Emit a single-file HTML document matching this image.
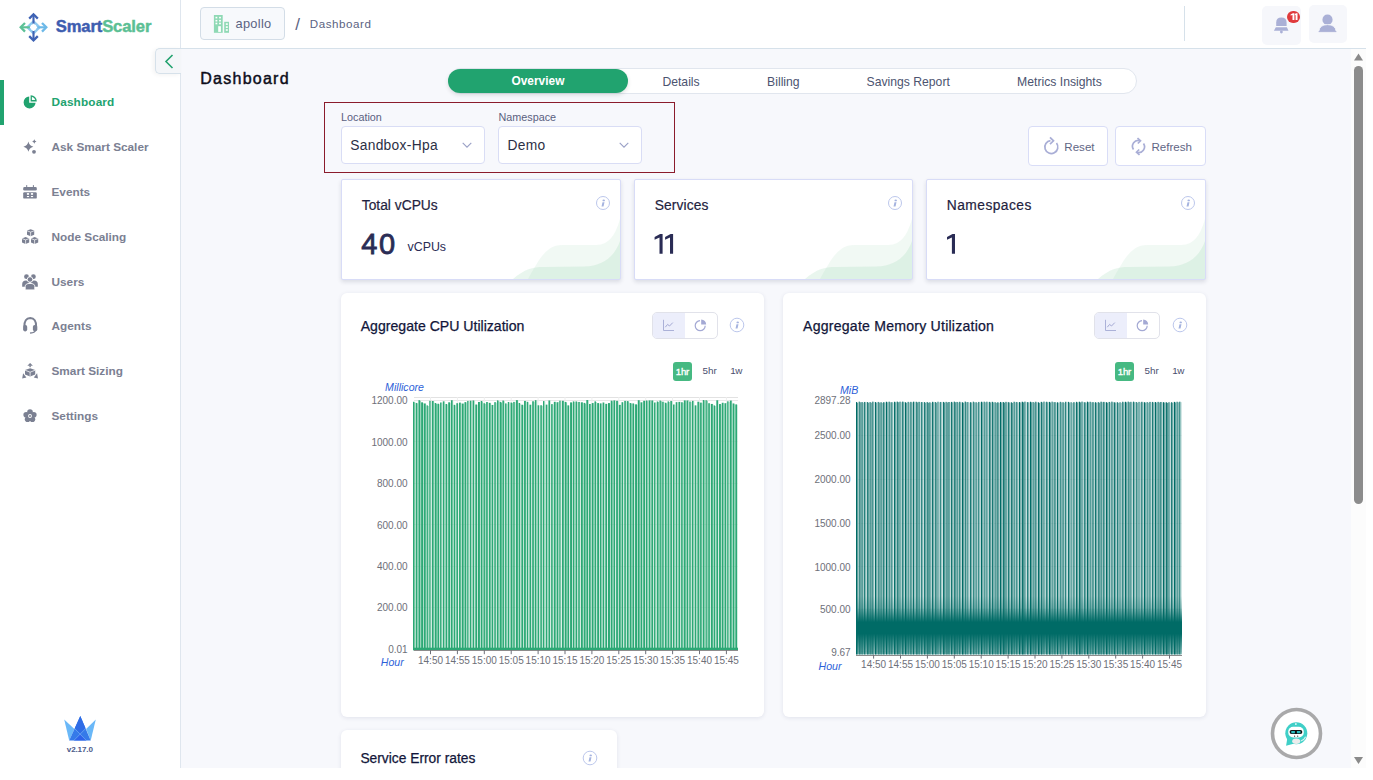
<!DOCTYPE html><html><head><meta charset="utf-8"><style>
html,body{margin:0;padding:0;background:#fff;width:1373px;height:780px;overflow:hidden}
#pg{position:absolute;left:0;top:0;width:1366px;height:768px;overflow:hidden;background:#f7f8fc;font-family:"Liberation Sans", sans-serif}
.t{position:absolute;line-height:1em;white-space:nowrap;font-family:"Liberation Sans", sans-serif}
.r{position:absolute;box-sizing:border-box}
svg{position:absolute;overflow:visible}
</style></head><body><div id="pg">
<div class="r" style="left:0px;top:0px;width:180px;height:768px;background:#fff;"></div>
<div class="r" style="left:180px;top:0px;width:1px;height:768px;background:#dfe6ee;"></div>
<div class="r" style="left:181px;top:0px;width:1185px;height:48px;background:#fff;"></div>
<div class="r" style="left:181px;top:48px;width:1185px;height:1px;background:#d6e1ea;"></div>
<div class="r" style="left:155px;top:48px;width:26px;height:26px;background:#f4f6f9;border:1px solid #d6e1ea;border-right:none;border-radius:5px 0 0 5px;box-shadow:-2px 1px 4px rgba(0,0,0,0.05)"></div>
<svg style="left:164px;top:54px" width="12" height="16" viewBox="0 0 12 16"><path d="M8.5 1 L2 7.5 L8.5 14" fill="none" stroke="#23a26f" stroke-width="1.6"/></svg>
<svg style="left:19px;top:12px" width="30" height="31" viewBox="0 0 30 31">
<path d="M14.5 7.7 L22.3 15.3 L14.5 22.9 L6.7 15.3Z" fill="#8ec9ef"/>
<path d="M14.5 7.7 L14.5 22.9 M6.7 15.3 L22.3 15.3" stroke="#fff" stroke-width="1.2"/>
<circle cx="14.5" cy="15.3" r="3.1" fill="#fff"/>
<g fill="none" stroke-linejoin="miter" stroke-linecap="butt">
<path d="M14.5 3.5 L14.5 11.6" stroke="#3e62b4" stroke-width="2.1"/><path d="M10.2 6.6 L14.5 2.3 L18.8 6.6" stroke="#3e62b4" stroke-width="2.3"/>
<path d="M14.5 19 L14.5 27.2" stroke="#3e62b4" stroke-width="2.1"/><path d="M10.2 24.1 L14.5 28.4 L18.8 24.1" stroke="#3e62b4" stroke-width="2.3"/>
<path d="M2.5 15.3 L10.9 15.3" stroke="#5cc196" stroke-width="2.1"/><path d="M6 11 L1.7 15.3 L6 19.6" stroke="#5cc196" stroke-width="2.3"/>
<path d="M18.2 15.3 L26.6 15.3" stroke="#6db9e8" stroke-width="2.1"/><path d="M23 11 L27.3 15.3 L23 19.6" stroke="#6db9e8" stroke-width="2.3"/>
</g></svg>
<div class="t" style="left:55.70px;top:18.99px;font-size:16.6px;font-weight:700;color:#3d5db0;letter-spacing:-0.12px;-webkit-text-stroke-width:0.45px;"><span style="color:#3d5db0">Smart</span><span style="color:#5bbf94">Scaler</span></div>
<div class="r" style="left:0px;top:80px;width:4px;height:45px;background:#21a36f;"></div>
<div class="t" style="left:51.50px;top:97.47px;font-size:11.8px;font-weight:700;color:#21a36f;letter-spacing:0.15px;">Dashboard</div>
<div class="t" style="left:51.50px;top:142.47px;font-size:11.8px;font-weight:700;color:#7b8092;letter-spacing:0px;">Ask Smart Scaler</div>
<div class="t" style="left:51.50px;top:187.47px;font-size:11.8px;font-weight:700;color:#7b8092;letter-spacing:0px;">Events</div>
<div class="t" style="left:51.50px;top:232.47px;font-size:11.8px;font-weight:700;color:#7b8092;letter-spacing:0px;">Node Scaling</div>
<div class="t" style="left:51.50px;top:277.47px;font-size:11.8px;font-weight:700;color:#7b8092;letter-spacing:0px;">Users</div>
<div class="t" style="left:51.50px;top:321.47px;font-size:11.8px;font-weight:700;color:#7b8092;letter-spacing:0px;">Agents</div>
<div class="t" style="left:51.50px;top:366.47px;font-size:11.8px;font-weight:700;color:#7b8092;letter-spacing:0px;">Smart Sizing</div>
<div class="t" style="left:51.50px;top:411.47px;font-size:11.8px;font-weight:700;color:#7b8092;letter-spacing:0px;">Settings</div>
<svg style="left:23px;top:95px" width="14" height="14" viewBox="0 0 14 14"><path d="M6.2 1.4 A6 6 0 1 0 12.6 7.8 L6.2 7.8 Z" fill="#21a36f"/><path d="M7.6 0.2 A6 6 0 0 1 13.8 6.4 L7.6 6.4 Z" fill="#21a36f"/><path d="M8.9 1.7 A4.7 4.7 0 0 1 12.3 5.1 L8.9 5.1 Z" fill="#fff"/></svg>
<svg style="left:22px;top:139px" width="16" height="16" viewBox="0 0 16 16"><path d="M6.4 2.6 Q7.3 6.8 11.4 7.7 Q7.3 8.6 6.4 12.8 Q5.5 8.6 1.4 7.7 Q5.5 6.8 6.4 2.6Z" fill="#7b8092"/><path d="M12.3 0.3 Q12.7 2.1 14.5 2.5 Q12.7 2.9 12.3 4.7 Q11.9 2.9 10.1 2.5 Q11.9 2.1 12.3 0.3Z" fill="#7b8092"/><circle cx="12" cy="12.8" r="1.9" fill="#7b8092"/></svg>
<svg style="left:23px;top:184px" width="14" height="15" viewBox="0 0 14 15"><rect x="3.2" y="1.1" width="1" height="3" fill="#7b8092"/><rect x="9.9" y="1.1" width="1" height="3" fill="#7b8092"/><rect x="0.2" y="3.1" width="13.6" height="3.5" rx="1.3" fill="#7b8092"/><rect x="0.2" y="8.2" width="13.6" height="6.4" rx="1.2" fill="#7b8092"/><rect x="3.9" y="9.1" width="2.2" height="1.7" fill="#fff"/><rect x="7.9" y="9.1" width="2.2" height="1.7" fill="#fff"/><rect x="3.9" y="12" width="2.2" height="1.1" fill="#fff"/><rect x="7.9" y="12" width="2.2" height="1.1" fill="#fff"/></svg>
<svg style="left:22px;top:229px" width="17" height="16" viewBox="0 0 17 16"><g fill="#7b8092"><path d="M5 1.6 L8.6 0.3 L12.2 1.6 L12.2 5.8 L8.6 7.3 L5 5.8Z"/><path d="M0 9.4 L3.6 8.1 L7.2 9.4 L7.2 13.6 L3.6 15.1 L0 13.6Z"/><path d="M9 9.4 L12.6 8.1 L16.2 9.4 L16.2 13.6 L12.6 15.1 L9 13.6Z"/></g><g stroke="#fff" stroke-width="0.7" fill="none"><path d="M5 1.8 L8.6 3.1 L12.2 1.8 M8.6 3.1 L8.6 7.3"/><path d="M0 9.6 L3.6 10.9 L7.2 9.6 M3.6 10.9 L3.6 15.1"/><path d="M9 9.6 L12.6 10.9 L16.2 9.6 M12.6 10.9 L12.6 15.1"/></g></svg>
<svg style="left:22px;top:274px" width="17" height="17" viewBox="0 0 17 17"><g fill="#7b8092"><circle cx="4.5" cy="2.7" r="2.4"/><circle cx="11.4" cy="2.7" r="2.4"/><path d="M0.2 12.8 L0.2 10 Q0.2 6.5 4 6.5 Q6.5 6.5 7.5 8.5 L5 12.8 Z"/><path d="M15.8 12.8 L15.8 10 Q15.8 6.5 12 6.5 Q9.5 6.5 8.5 8.5 L11 12.8 Z"/></g><g fill="#7b8092" stroke="#fff" stroke-width="0.9"><circle cx="8" cy="5.5" r="2.8"/><path d="M3.2 15.9 L3.2 12.6 Q3.2 9.4 8 9.4 Q12.8 9.4 12.8 12.6 L12.8 15.9 Z"/></g></svg>
<svg style="left:22px;top:317px" width="16" height="17" viewBox="0 0 16 17"><path d="M2.4 9.5 Q2.2 1.2 8.25 1.1 Q14.3 1.2 14.1 9.5" fill="none" stroke="#7b8092" stroke-width="2"/><rect x="1.1" y="8" width="4.1" height="6.4" rx="1.8" fill="#7b8092"/><rect x="10.9" y="8" width="4.4" height="6.4" rx="1.8" fill="#7b8092"/><path d="M13.2 13.5 Q12.8 15.8 8.6 16" fill="none" stroke="#7b8092" stroke-width="1.4" stroke-linecap="round"/></svg>
<svg style="left:22px;top:362px" width="17" height="17" viewBox="0 0 17 17"><g fill="#7b8092"><path d="M5.3 3.8 L8.1 0.9 L10.9 3.8Z"/><rect x="7.4" y="3.4" width="1.4" height="1.8"/><path d="M0.2 16.6 L1.1 11.2 L4.4 15.6Z"/><path d="M16 16.6 L15.1 11.2 L11.8 15.6Z"/><path d="M8.1 6.2 L13.2 8.1 L13.2 12.6 L8.1 14.4 L3 12.6 L3 8.1Z"/></g><path d="M3 8.2 L8.1 10.2 L13.2 8.2 M8.1 10.2 L8.1 14.4" stroke="#fff" stroke-width="0.75" fill="none"/></svg>
<svg style="left:23px;top:409px" width="14" height="14" viewBox="0 0 14 14"><g fill="#7b8092"><circle cx="7" cy="3" r="2.8"/><circle cx="10.8" cy="5.8" r="2.8"/><circle cx="9.4" cy="10.3" r="2.8"/><circle cx="4.6" cy="10.3" r="2.8"/><circle cx="3.2" cy="5.8" r="2.8"/><circle cx="7" cy="7" r="4"/></g><circle cx="7" cy="7" r="1.9" fill="#fff"/><circle cx="7" cy="7" r="1" fill="#7b8092"/></svg>
<svg style="left:58px;top:710px" width="44" height="34" viewBox="0 0 44 34"><path d="M6.2 9.4 L16.4 18.9 L11.2 30.4Z" fill="#6ab8f8"/><path d="M37.8 9.4 L28.1 18.9 L32.7 30.4Z" fill="#6ab8f8"/><path d="M22.3 5.9 L32.7 30.4 L11.2 30.4 Z" fill="#357ae9"/><path d="M22.3 5.9 L27.4 18 L22.1 23.6 L16.9 18Z" fill="#2f6ce6"/><path d="M15.9 30.4 L22.1 24.2 L28.3 30.4Z" fill="#2e63ea"/><path d="M15.9 30.4 L27.6 18.6 M16.6 18.6 L28.3 30.4" stroke="#7fb4f4" stroke-width="0.6"/></svg>
<div class="t" style="left:66.80px;top:745.82px;font-size:8.1px;font-weight:700;color:#4b5b8a;letter-spacing:-0.15px;">v2.17.0</div>
<div class="r" style="left:200px;top:7px;width:85px;height:33px;background:#f7f9fc;border:1px solid #d3dde7;border-radius:4px"></div>
<svg style="left:213px;top:14px" width="17" height="20" viewBox="0 0 17 20"><rect x="0.9" y="1" width="8.8" height="17.8" fill="#8fd9b5"/><rect x="11.2" y="7.8" width="4.8" height="11" fill="#8fd9b5"/><g fill="#fff"><rect x="2.5" y="2.8" width="1.8" height="1.6"/><rect x="6.1" y="2.8" width="1.8" height="1.6"/><rect x="2.5" y="5.9" width="1.8" height="1.6"/><rect x="6.1" y="5.9" width="1.8" height="1.6"/><rect x="2.5" y="8.7" width="1.8" height="1.6"/><rect x="6.1" y="8.7" width="1.8" height="1.6"/><rect x="5.2" y="12.2" width="2.7" height="5.7"/><rect x="12.8" y="9.3" width="2" height="1.6"/><rect x="12.8" y="12.3" width="2" height="1.6"/><rect x="12.8" y="15.2" width="2" height="1.6"/></g></svg>
<div class="t" style="left:235.50px;top:18.02px;font-size:12.8px;font-weight:400;color:#5b6382;letter-spacing:0.3px;">apollo</div>
<div class="t" style="left:295.30px;top:15.55px;font-size:17px;font-weight:400;color:#5b6382;">/</div>
<div class="t" style="left:309.80px;top:18.24px;font-size:11.6px;font-weight:400;color:#5b6382;letter-spacing:0.55px;">Dashboard</div>
<div class="r" style="left:1184px;top:6px;width:1px;height:35px;background:#d6e1ea;"></div>
<div class="r" style="left:1262px;top:6px;width:39px;height:39px;background:#f6f7fb;border-radius:5px"></div>
<div class="r" style="left:1309px;top:5px;width:38px;height:38px;background:#f6f7fb;border-radius:5px"></div>
<svg style="left:1273px;top:16px" width="17" height="18" viewBox="0 0 17 18"><path d="M3.2 9.9 L3.2 6.5 Q3.2 1.4 8.4 1.4 Q13.6 1.4 13.6 6.5 L13.6 9.9 Z" fill="#aab0d6"/><path d="M2.8 11.3 L13.9 11.3 L15.5 14.8 L0.9 14.8Z" fill="#aab0d6"/><circle cx="8.4" cy="16" r="1.4" fill="#aab0d6"/></svg>
<div class="r" style="left:1287.3px;top:10.7px;width:12.8px;height:12.8px;background:#e03a3c;border-radius:50%"></div>
<svg style="left:1287px;top:10px" width="14" height="14" viewBox="0 0 14 14"><path d="M5.5 10 L7.4 10 L7.4 3.3 L5.9 3.3 L3.6 4.4 L3.6 5.6 L5.5 4.9Z M8.6 10 L10.5 10 L10.5 3.3 L9 3.3 L7.9 3.9 L7.9 5.2 L8.6 4.9Z" fill="#fff"/></svg>
<svg style="left:1318px;top:14px" width="19" height="19" viewBox="0 0 19 19"><circle cx="9.5" cy="5.7" r="5.1" fill="#aab0d6"/><path d="M0.7 17.6 Q1.5 10.6 9.5 10.6 Q17.5 10.6 18.3 17.6Z" fill="#aab0d6" stroke="#f6f7fb" stroke-width="0.9"/><path d="M0.7 17.6 L18.3 17.6" stroke="#aab0d6" stroke-width="1"/></svg>
<div class="r" style="left:1351px;top:49px;width:15px;height:719px;background:#fcfcfc;"></div>
<svg style="left:1351px;top:49px" width="15" height="719" viewBox="0 0 15 719"><path d="M3 11.5 L7.5 4.5 L12 11.5Z" fill="#8a8a8a"/><path d="M3 708 L7.5 715 L12 708Z" fill="#8a8a8a"/></svg>
<div class="r" style="left:1354px;top:66px;width:9px;height:438px;background:#8c8c8c;border-radius:5px"></div>
<div class="t" style="left:200.30px;top:70.90px;font-size:16.0px;font-weight:400;color:#0d0d1a;letter-spacing:1.25px;-webkit-text-stroke:0.45px #0d0d1a;">Dashboard</div>
<div class="r" style="left:448px;top:68px;width:689px;height:26px;background:#fff;border:1px solid #e1e6ee;border-radius:13px"></div>
<div class="r" style="left:448px;top:69px;width:180px;height:24px;background:#21a36f;border-radius:12px;box-shadow:0 2px 4px rgba(0,0,0,0.12)"></div>
<div class="t" style="left:511.50px;top:76.19px;font-size:11.9px;font-weight:700;color:#fff;">Overview</div>
<div class="t" style="left:662.40px;top:75.53px;font-size:12.2px;font-weight:400;color:#4c5470;">Details</div>
<div class="t" style="left:767.10px;top:75.53px;font-size:12.2px;font-weight:400;color:#4c5470;">Billing</div>
<div class="t" style="left:866.50px;top:75.53px;font-size:12.2px;font-weight:400;color:#4c5470;">Savings Report</div>
<div class="t" style="left:1017.10px;top:75.53px;font-size:12.2px;font-weight:400;color:#4c5470;">Metrics Insights</div>
<div class="r" style="left:324px;top:102px;width:351px;height:71px;border:1px solid #8b1c2c"></div>
<div class="t" style="left:341.00px;top:111.72px;font-size:10.8px;font-weight:400;color:#5a6080;">Location</div>
<div class="t" style="left:498.50px;top:111.72px;font-size:10.8px;font-weight:400;color:#5a6080;">Namespace</div>
<div class="r" style="left:341px;top:126px;width:144px;height:38px;background:#fff;border:1px solid #d9ddf5;border-radius:4px"></div>
<div class="r" style="left:498px;top:126px;width:144px;height:38px;background:#fff;border:1px solid #d9ddf5;border-radius:4px"></div>
<div class="t" style="left:350.20px;top:138.57px;font-size:13.8px;font-weight:400;color:#2c2f45;letter-spacing:0.3px;">Sandbox-Hpa</div>
<div class="t" style="left:507.50px;top:138.57px;font-size:13.8px;font-weight:400;color:#2c2f45;letter-spacing:0.3px;">Demo</div>
<svg style="left:462px;top:142px" width="10" height="7" viewBox="0 0 10 7"><path d="M0.7 0.8 L5 5.2 L9.3 0.8" fill="none" stroke="#9aa0c6" stroke-width="1.1"/></svg>
<svg style="left:619px;top:142px" width="10" height="7" viewBox="0 0 10 7"><path d="M0.7 0.8 L5 5.2 L9.3 0.8" fill="none" stroke="#9aa0c6" stroke-width="1.1"/></svg>
<div class="r" style="left:1028px;top:126px;width:80px;height:40px;background:#fff;border:1px solid #d9ddf7;border-radius:4px"></div>
<div class="r" style="left:1115px;top:126px;width:91px;height:40px;background:#fff;border:1px solid #d9ddf7;border-radius:4px"></div>
<svg style="left:1043px;top:136px" width="16" height="19" viewBox="0 0 16 19"><path d="M7.5 4.6 A6.5 6.5 0 1 0 13.5 7.1" fill="none" stroke="#a9aed6" stroke-width="1.7"/><path d="M7 1.4 L10.5 4.8 L7 8.2" fill="none" stroke="#a9aed6" stroke-width="1.7"/></svg>
<svg style="left:1130.7px;top:136.5px" width="15" height="19" viewBox="0 0 15 19"><path d="M2.5 12.5 A5.8 5.8 0 0 1 9 3.7" fill="none" stroke="#a9aed6" stroke-width="1.7"/><path d="M6.5 1 L9.5 3.8 L6.8 6.5" fill="none" stroke="#a9aed6" stroke-width="1.7"/><path d="M12.5 6.5 A5.8 5.8 0 0 1 6 15.3" fill="none" stroke="#a9aed6" stroke-width="1.7"/><path d="M8.5 18 L5.5 15.2 L8.2 12.5" fill="none" stroke="#a9aed6" stroke-width="1.7"/></svg>
<div class="t" style="left:1064.30px;top:140.94px;font-size:11.6px;font-weight:400;color:#5f6685;">Reset</div>
<div class="t" style="left:1151.40px;top:140.94px;font-size:11.6px;font-weight:400;color:#5f6685;">Refresh</div>
<div class="r" style="left:341px;top:179px;width:280px;height:101px;background:#fff;border:1px solid #d8dcf7;border-radius:2px;box-shadow:0 2px 4px rgba(20,30,60,0.13);overflow:hidden"><svg style="right:0;bottom:0" width="110" height="62" viewBox="0 0 110 62"><path d="M3 62 C15 52 22 50 34 50 L74 49.5 C95 49 105 38 110 24 L110 62 Z" fill="#7cc99c" opacity="0.17"/><path d="M18 62 C28 45 35 28 52 28 L86 28 C100 28 106 16 110 2 L110 62 Z" fill="#8fd1aa" opacity="0.13"/></svg></div>
<div class="t" style="left:361.80px;top:199.27px;font-size:13.8px;font-weight:400;color:#1f2340;letter-spacing:0px;-webkit-text-stroke:0.2px #1f2340;">Total vCPUs</div>
<svg style="left:595px;top:195px" width="16" height="16" viewBox="0 0 16 16"><circle cx="8" cy="8" r="6.5" fill="none" stroke="#bcc7ec" stroke-width="1"/><ellipse cx="8.7" cy="5.4" rx="1.25" ry="0.85" fill="#a5b3df"/><path d="M7.5 7.2 L9.5 7.2 L8.5 11.6 L6.5 11.6 Z" fill="#a5b3df"/></svg>
<div class="r" style="left:634px;top:179px;width:279px;height:101px;background:#fff;border:1px solid #d8dcf7;border-radius:2px;box-shadow:0 2px 4px rgba(20,30,60,0.13);overflow:hidden"><svg style="right:0;bottom:0" width="110" height="62" viewBox="0 0 110 62"><path d="M3 62 C15 52 22 50 34 50 L74 49.5 C95 49 105 38 110 24 L110 62 Z" fill="#7cc99c" opacity="0.17"/><path d="M18 62 C28 45 35 28 52 28 L86 28 C100 28 106 16 110 2 L110 62 Z" fill="#8fd1aa" opacity="0.13"/></svg></div>
<div class="t" style="left:654.80px;top:199.27px;font-size:13.8px;font-weight:400;color:#1f2340;letter-spacing:0.1px;-webkit-text-stroke:0.2px #1f2340;">Services</div>
<svg style="left:887px;top:195px" width="16" height="16" viewBox="0 0 16 16"><circle cx="8" cy="8" r="6.5" fill="none" stroke="#bcc7ec" stroke-width="1"/><ellipse cx="8.7" cy="5.4" rx="1.25" ry="0.85" fill="#a5b3df"/><path d="M7.5 7.2 L9.5 7.2 L8.5 11.6 L6.5 11.6 Z" fill="#a5b3df"/></svg>
<div class="r" style="left:926px;top:179px;width:280px;height:101px;background:#fff;border:1px solid #d8dcf7;border-radius:2px;box-shadow:0 2px 4px rgba(20,30,60,0.13);overflow:hidden"><svg style="right:0;bottom:0" width="110" height="62" viewBox="0 0 110 62"><path d="M3 62 C15 52 22 50 34 50 L74 49.5 C95 49 105 38 110 24 L110 62 Z" fill="#7cc99c" opacity="0.17"/><path d="M18 62 C28 45 35 28 52 28 L86 28 C100 28 106 16 110 2 L110 62 Z" fill="#8fd1aa" opacity="0.13"/></svg></div>
<div class="t" style="left:946.80px;top:199.27px;font-size:13.8px;font-weight:400;color:#1f2340;letter-spacing:0.45px;-webkit-text-stroke:0.2px #1f2340;">Namespaces</div>
<svg style="left:1180px;top:195px" width="16" height="16" viewBox="0 0 16 16"><circle cx="8" cy="8" r="6.5" fill="none" stroke="#bcc7ec" stroke-width="1"/><ellipse cx="8.7" cy="5.4" rx="1.25" ry="0.85" fill="#a5b3df"/><path d="M7.5 7.2 L9.5 7.2 L8.5 11.6 L6.5 11.6 Z" fill="#a5b3df"/></svg>
<div class="t" style="left:361.30px;top:229.85px;font-size:29.0px;font-weight:400;color:#2a2c55;letter-spacing:1.6px;-webkit-text-stroke:0.8px #2a2c55;">40</div>
<div class="t" style="left:407.50px;top:241.16px;font-size:12.4px;font-weight:400;color:#2a2c55;">vCPUs</div>
<svg style="left:0;top:0" width="1366" height="768"><path d="M659.5 253.7 L662.6 253.7 L662.6 234 L660.1 234 L654.6 236.9 L654.6 239.8 L659.5 237.4 Z" fill="#2a2c55"/></svg>
<svg style="left:0;top:0" width="1366" height="768"><path d="M670.0 253.7 L673.1 253.7 L673.1 234 L670.6 234 L665.1 236.9 L665.1 239.8 L670.0 237.4 Z" fill="#2a2c55"/></svg>
<svg style="left:0;top:0" width="1366" height="768"><path d="M951.9 253.7 L955.0 253.7 L955.0 234 L952.5 234 L947.0 236.9 L947.0 239.8 L951.9 237.4 Z" fill="#2a2c55"/></svg>
<div class="r" style="left:341px;top:293px;width:423px;height:424px;background:#fff;border-radius:6px;box-shadow:0 1px 4px rgba(30,40,90,0.10)"></div>
<div class="t" style="left:360.70px;top:319.11px;font-size:14.1px;font-weight:400;color:#12163a;letter-spacing:0px;-webkit-text-stroke:0.25px #12163a;">Aggregate CPU Utilization</div>
<div class="r" style="left:651.7px;top:312px;width:66px;height:27px;background:#fff;border:1px solid #e1e2ea;border-radius:5px;overflow:hidden"><div style="position:absolute;left:0;top:0;width:32px;height:27px;background:#eceefb"></div></div>
<svg style="left:662.2px;top:319px" width="13" height="13" viewBox="0 0 13 13"><path d="M1.5 0.8 L1.5 11.5 L12 11.5" fill="none" stroke="#a4a9d4" stroke-width="0.9"/><path d="M3.3 8.2 L5.6 5.4 L7.5 7 L10.8 3.6" fill="none" stroke="#a4a9d4" stroke-width="1"/></svg>
<svg style="left:694.2px;top:319px" width="13" height="13" viewBox="0 0 13 13"><path d="M6 1.7 A5 5 0 1 0 11.2 6.8" fill="none" stroke="#a4a9d4" stroke-width="1.2"/><path d="M7.2 0.6 A5.4 5.4 0 0 1 12.2 5.6 L7.2 5.6Z" fill="#a4a9d4"/></svg>
<svg style="left:729px;top:317px" width="16" height="16" viewBox="0 0 16 16"><circle cx="8" cy="8" r="6.8" fill="none" stroke="#bcc7ec" stroke-width="1"/><ellipse cx="8.7" cy="5.4" rx="1.25" ry="0.85" fill="#a5b3df"/><path d="M7.5 7.2 L9.5 7.2 L8.5 11.6 L6.5 11.6 Z" fill="#a5b3df"/></svg>
<div class="r" style="left:673px;top:362px;width:19px;height:19px;background:#46b982;border-radius:3px"></div>
<div class="t" style="left:675.80px;top:366.74px;font-size:9.6px;font-weight:400;color:#fff;letter-spacing:-0.2px;-webkit-text-stroke:0.35px #fff;">1hr</div>
<div class="t" style="left:702.60px;top:366.48px;font-size:9.9px;font-weight:400;color:#4a4f6e;letter-spacing:-0.1px;">5hr</div>
<div class="t" style="left:730.30px;top:366.48px;font-size:9.9px;font-weight:400;color:#4a4f6e;letter-spacing:-0.6px;">1w</div>
<div class="t" style="left:385.10px;top:382.29px;font-size:10.6px;font-weight:400;color:#2d5fd8;font-style:italic;">Millicore</div>
<div class="r" style="left:0;top:0;width:1366px;height:768px;pointer-events:none"><svg style="left:0;top:0" width="1366" height="768" viewBox="0 0 1366 768"><rect x="414" y="400" width="324" height="1" fill="#e8e8e8"/><rect x="414" y="441" width="324" height="1" fill="#e8e8e8"/><rect x="414" y="483" width="324" height="1" fill="#e8e8e8"/><rect x="414" y="524" width="324" height="1" fill="#e8e8e8"/><rect x="414" y="566" width="324" height="1" fill="#e8e8e8"/><rect x="414" y="607" width="324" height="1" fill="#e8e8e8"/><rect x="414" y="648" width="324" height="1" fill="#e8e8e8"/><rect x="414" y="397" width="324" height="1" fill="#e2e2e2"/><rect x="430.0" y="397" width="1" height="253.20000000000005" fill="#eeeeee"/><rect x="456.9" y="397" width="1" height="253.20000000000005" fill="#eeeeee"/><rect x="483.8" y="397" width="1" height="253.20000000000005" fill="#eeeeee"/><rect x="510.7" y="397" width="1" height="253.20000000000005" fill="#eeeeee"/><rect x="537.6" y="397" width="1" height="253.20000000000005" fill="#eeeeee"/><rect x="564.5" y="397" width="1" height="253.20000000000005" fill="#eeeeee"/><rect x="591.4" y="397" width="1" height="253.20000000000005" fill="#eeeeee"/><rect x="618.3" y="397" width="1" height="253.20000000000005" fill="#eeeeee"/><rect x="645.2" y="397" width="1" height="253.20000000000005" fill="#eeeeee"/><rect x="672.1" y="397" width="1" height="253.20000000000005" fill="#eeeeee"/><rect x="699.0" y="397" width="1" height="253.20000000000005" fill="#eeeeee"/><rect x="725.9" y="397" width="1" height="253.20000000000005" fill="#eeeeee"/><rect x="413.00" y="401.78" width="1.45" height="248.42" fill="#2ca875"/><rect x="414.45" y="402.38" width="0.79" height="247.82" fill="#4dba8a"/><rect x="415.24" y="402.38" width="0.46" height="247.82" fill="#f2faf6"/><rect x="415.71" y="402.95" width="1.59" height="247.25" fill="#2ca875"/><rect x="417.30" y="403.55" width="0.78" height="246.65" fill="#78caa6"/><rect x="418.07" y="403.55" width="0.34" height="246.65" fill="#f2faf6"/><rect x="418.42" y="400.21" width="1.63" height="249.99" fill="#2ca875"/><rect x="420.05" y="400.81" width="0.73" height="249.39" fill="#4fbb8b"/><rect x="420.78" y="400.81" width="0.34" height="249.39" fill="#f2faf6"/><rect x="421.12" y="402.33" width="1.89" height="247.87" fill="#2ca875"/><rect x="423.01" y="402.93" width="0.46" height="247.27" fill="#5cc094"/><rect x="423.47" y="402.93" width="0.35" height="247.27" fill="#f2faf6"/><rect x="423.83" y="403.45" width="1.96" height="246.75" fill="#2ca875"/><rect x="425.80" y="404.05" width="0.29" height="246.15" fill="#6dc69f"/><rect x="426.08" y="404.05" width="0.45" height="246.15" fill="#f2faf6"/><rect x="426.54" y="405.37" width="1.38" height="244.83" fill="#2ca875"/><rect x="427.92" y="405.97" width="0.81" height="244.23" fill="#62c298"/><rect x="428.73" y="405.97" width="0.51" height="244.23" fill="#f2faf6"/><rect x="429.25" y="400.79" width="1.43" height="249.41" fill="#2ca875"/><rect x="430.68" y="401.39" width="0.88" height="248.81" fill="#97d5ba"/><rect x="431.56" y="401.39" width="0.39" height="248.81" fill="#f2faf6"/><rect x="431.96" y="400.99" width="1.73" height="249.21" fill="#2ca875"/><rect x="433.69" y="401.59" width="0.51" height="248.61" fill="#6bc59d"/><rect x="434.20" y="401.59" width="0.46" height="248.61" fill="#f2faf6"/><rect x="434.67" y="403.01" width="1.39" height="247.19" fill="#2ca875"/><rect x="436.06" y="403.61" width="0.97" height="246.59" fill="#5abf93"/><rect x="437.03" y="403.61" width="0.34" height="246.59" fill="#f2faf6"/><rect x="437.38" y="403.74" width="1.63" height="246.46" fill="#2ca875"/><rect x="439.00" y="404.34" width="0.68" height="245.86" fill="#80cdab"/><rect x="439.68" y="404.34" width="0.39" height="245.86" fill="#f2faf6"/><rect x="440.08" y="402.49" width="1.54" height="247.71" fill="#2ca875"/><rect x="441.63" y="403.09" width="0.66" height="247.11" fill="#8bd1b2"/><rect x="442.29" y="403.09" width="0.50" height="247.11" fill="#f2faf6"/><rect x="442.79" y="401.34" width="1.72" height="248.86" fill="#2ca875"/><rect x="444.51" y="401.94" width="0.54" height="248.26" fill="#9dd7be"/><rect x="445.05" y="401.94" width="0.44" height="248.26" fill="#f2faf6"/><rect x="445.50" y="404.01" width="1.54" height="246.19" fill="#2ca875"/><rect x="447.04" y="404.61" width="0.63" height="245.59" fill="#51bc8d"/><rect x="447.66" y="404.61" width="0.54" height="245.59" fill="#f2faf6"/><rect x="448.21" y="402.30" width="1.84" height="247.90" fill="#2ca875"/><rect x="450.05" y="402.90" width="0.50" height="247.30" fill="#76c9a5"/><rect x="450.55" y="402.90" width="0.36" height="247.30" fill="#f2faf6"/><rect x="450.92" y="400.22" width="1.78" height="249.98" fill="#2ca875"/><rect x="452.70" y="400.82" width="0.43" height="249.38" fill="#7fccaa"/><rect x="453.13" y="400.82" width="0.49" height="249.38" fill="#f2faf6"/><rect x="453.62" y="404.82" width="1.55" height="245.38" fill="#2ca875"/><rect x="455.18" y="405.42" width="0.67" height="244.78" fill="#81cdac"/><rect x="455.85" y="405.42" width="0.47" height="244.78" fill="#f2faf6"/><rect x="456.33" y="403.19" width="1.65" height="247.01" fill="#2ca875"/><rect x="457.98" y="403.79" width="0.55" height="246.41" fill="#a4dac2"/><rect x="458.53" y="403.79" width="0.51" height="246.41" fill="#f2faf6"/><rect x="459.04" y="402.61" width="1.78" height="247.59" fill="#2ca875"/><rect x="460.82" y="403.21" width="0.58" height="246.99" fill="#8cd1b2"/><rect x="461.40" y="403.21" width="0.34" height="246.99" fill="#f2faf6"/><rect x="461.75" y="403.56" width="1.99" height="246.64" fill="#2ca875"/><rect x="463.74" y="404.16" width="0.20" height="246.04" fill="#62c298"/><rect x="463.95" y="404.16" width="0.50" height="246.04" fill="#f2faf6"/><rect x="464.46" y="402.12" width="1.78" height="248.08" fill="#2ca875"/><rect x="466.24" y="402.72" width="0.59" height="247.48" fill="#74c8a3"/><rect x="466.83" y="402.72" width="0.33" height="247.48" fill="#f2faf6"/><rect x="467.17" y="400.92" width="1.43" height="249.28" fill="#2ca875"/><rect x="468.59" y="401.52" width="0.94" height="248.68" fill="#92d3b7"/><rect x="469.53" y="401.52" width="0.34" height="248.68" fill="#f2faf6"/><rect x="469.88" y="400.71" width="1.51" height="249.49" fill="#2ca875"/><rect x="471.39" y="401.31" width="0.78" height="248.89" fill="#9dd7bd"/><rect x="472.17" y="401.31" width="0.41" height="248.89" fill="#f2faf6"/><rect x="472.58" y="400.44" width="1.64" height="249.76" fill="#2ca875"/><rect x="474.22" y="401.04" width="0.62" height="249.16" fill="#9ed7be"/><rect x="474.84" y="401.04" width="0.44" height="249.16" fill="#f2faf6"/><rect x="475.29" y="404.51" width="1.91" height="245.69" fill="#2ca875"/><rect x="477.20" y="405.11" width="0.41" height="245.09" fill="#6fc6a0"/><rect x="477.61" y="405.11" width="0.38" height="245.09" fill="#f2faf6"/><rect x="478.00" y="401.97" width="1.92" height="248.23" fill="#2ca875"/><rect x="479.92" y="402.57" width="0.25" height="247.63" fill="#55bd8f"/><rect x="480.17" y="402.57" width="0.53" height="247.63" fill="#f2faf6"/><rect x="480.71" y="400.97" width="1.50" height="249.23" fill="#2ca875"/><rect x="482.21" y="401.57" width="0.83" height="248.63" fill="#76c9a5"/><rect x="483.03" y="401.57" width="0.37" height="248.63" fill="#f2faf6"/><rect x="483.42" y="403.24" width="1.52" height="246.96" fill="#2ca875"/><rect x="484.94" y="403.84" width="0.85" height="246.36" fill="#6fc7a0"/><rect x="485.79" y="403.84" width="0.32" height="246.36" fill="#f2faf6"/><rect x="486.12" y="402.03" width="1.72" height="248.17" fill="#2ca875"/><rect x="487.84" y="402.63" width="0.45" height="247.57" fill="#8bd0b2"/><rect x="488.30" y="402.63" width="0.53" height="247.57" fill="#f2faf6"/><rect x="488.83" y="402.84" width="1.75" height="247.36" fill="#2ca875"/><rect x="490.58" y="403.44" width="0.48" height="246.76" fill="#4bb989"/><rect x="491.06" y="403.44" width="0.47" height="246.76" fill="#f2faf6"/><rect x="491.54" y="404.95" width="1.86" height="245.25" fill="#2ca875"/><rect x="493.40" y="405.55" width="0.33" height="244.65" fill="#95d4b9"/><rect x="493.73" y="405.55" width="0.51" height="244.65" fill="#f2faf6"/><rect x="494.25" y="402.16" width="1.61" height="248.04" fill="#2ca875"/><rect x="495.86" y="402.76" width="0.75" height="247.44" fill="#85ceae"/><rect x="496.60" y="402.76" width="0.35" height="247.44" fill="#f2faf6"/><rect x="496.96" y="400.34" width="1.39" height="249.86" fill="#2ca875"/><rect x="498.35" y="400.94" width="0.94" height="249.26" fill="#56bd90"/><rect x="499.29" y="400.94" width="0.37" height="249.26" fill="#f2faf6"/><rect x="499.67" y="401.87" width="1.38" height="248.33" fill="#2ca875"/><rect x="501.05" y="402.47" width="0.99" height="247.73" fill="#55bd8f"/><rect x="502.04" y="402.47" width="0.32" height="247.73" fill="#f2faf6"/><rect x="502.38" y="400.56" width="1.59" height="249.64" fill="#2ca875"/><rect x="503.96" y="401.16" width="0.78" height="249.04" fill="#9dd7bd"/><rect x="504.75" y="401.16" width="0.33" height="249.04" fill="#f2faf6"/><rect x="505.08" y="403.38" width="1.45" height="246.82" fill="#2ca875"/><rect x="506.53" y="403.98" width="0.88" height="246.22" fill="#68c49c"/><rect x="507.40" y="403.98" width="0.38" height="246.22" fill="#f2faf6"/><rect x="507.79" y="402.00" width="1.43" height="248.20" fill="#2ca875"/><rect x="509.22" y="402.60" width="0.76" height="247.60" fill="#a9dbc5"/><rect x="509.98" y="402.60" width="0.51" height="247.60" fill="#f2faf6"/><rect x="510.50" y="402.56" width="1.66" height="247.64" fill="#2ca875"/><rect x="512.16" y="403.16" width="0.69" height="247.04" fill="#50bb8c"/><rect x="512.86" y="403.16" width="0.34" height="247.04" fill="#f2faf6"/><rect x="513.21" y="401.88" width="1.52" height="248.32" fill="#2ca875"/><rect x="514.73" y="402.48" width="0.68" height="247.72" fill="#56bd90"/><rect x="515.41" y="402.48" width="0.50" height="247.72" fill="#f2faf6"/><rect x="515.92" y="400.13" width="1.97" height="250.07" fill="#2ca875"/><rect x="517.88" y="400.73" width="0.30" height="249.47" fill="#54bd8f"/><rect x="518.18" y="400.73" width="0.44" height="249.47" fill="#f2faf6"/><rect x="518.62" y="402.99" width="1.37" height="247.21" fill="#2ca875"/><rect x="519.99" y="403.59" width="0.89" height="246.61" fill="#a7dbc4"/><rect x="520.89" y="403.59" width="0.44" height="246.61" fill="#f2faf6"/><rect x="521.33" y="404.75" width="1.80" height="245.45" fill="#2ca875"/><rect x="523.13" y="405.35" width="0.52" height="244.85" fill="#6ac59d"/><rect x="523.65" y="405.35" width="0.38" height="244.85" fill="#f2faf6"/><rect x="524.04" y="400.92" width="1.85" height="249.28" fill="#2ca875"/><rect x="525.89" y="401.52" width="0.41" height="248.68" fill="#93d4b7"/><rect x="526.30" y="401.52" width="0.44" height="248.68" fill="#f2faf6"/><rect x="526.75" y="401.81" width="1.49" height="248.39" fill="#2ca875"/><rect x="528.24" y="402.41" width="0.71" height="247.79" fill="#a8dbc5"/><rect x="528.95" y="402.41" width="0.50" height="247.79" fill="#f2faf6"/><rect x="529.46" y="404.69" width="1.87" height="245.51" fill="#2ca875"/><rect x="531.33" y="405.29" width="0.33" height="244.91" fill="#8fd2b5"/><rect x="531.66" y="405.29" width="0.50" height="244.91" fill="#f2faf6"/><rect x="532.17" y="401.25" width="1.69" height="248.95" fill="#2ca875"/><rect x="533.85" y="401.85" width="0.61" height="248.35" fill="#48b987"/><rect x="534.47" y="401.85" width="0.40" height="248.35" fill="#f2faf6"/><rect x="534.88" y="400.15" width="1.53" height="250.05" fill="#2ca875"/><rect x="536.41" y="400.75" width="0.79" height="249.45" fill="#8bd0b2"/><rect x="537.20" y="400.75" width="0.38" height="249.45" fill="#f2faf6"/><rect x="537.58" y="405.26" width="1.64" height="244.94" fill="#2ca875"/><rect x="539.22" y="405.86" width="0.53" height="244.34" fill="#a8dbc5"/><rect x="539.76" y="405.86" width="0.53" height="244.34" fill="#f2faf6"/><rect x="540.29" y="405.25" width="1.59" height="244.95" fill="#2ca875"/><rect x="541.88" y="405.85" width="0.74" height="244.35" fill="#5cc094"/><rect x="542.62" y="405.85" width="0.37" height="244.35" fill="#f2faf6"/><rect x="543.00" y="401.08" width="1.48" height="249.12" fill="#2ca875"/><rect x="544.48" y="401.68" width="0.76" height="248.52" fill="#a0d8bf"/><rect x="545.24" y="401.68" width="0.46" height="248.52" fill="#f2faf6"/><rect x="545.71" y="404.62" width="1.66" height="245.58" fill="#2ca875"/><rect x="547.37" y="405.22" width="0.57" height="244.98" fill="#95d4b9"/><rect x="547.94" y="405.22" width="0.47" height="244.98" fill="#f2faf6"/><rect x="548.42" y="400.47" width="1.78" height="249.73" fill="#2ca875"/><rect x="550.19" y="401.07" width="0.40" height="249.13" fill="#94d4b8"/><rect x="550.60" y="401.07" width="0.52" height="249.13" fill="#f2faf6"/><rect x="551.12" y="404.13" width="1.66" height="246.07" fill="#2ca875"/><rect x="552.78" y="404.73" width="0.68" height="245.47" fill="#94d4b8"/><rect x="553.46" y="404.73" width="0.36" height="245.47" fill="#f2faf6"/><rect x="553.83" y="401.83" width="1.87" height="248.37" fill="#2ca875"/><rect x="555.70" y="402.43" width="0.30" height="247.77" fill="#6dc69f"/><rect x="556.00" y="402.43" width="0.53" height="247.77" fill="#f2faf6"/><rect x="556.54" y="402.21" width="1.96" height="247.99" fill="#2ca875"/><rect x="558.51" y="402.81" width="0.26" height="247.39" fill="#57be90"/><rect x="558.76" y="402.81" width="0.48" height="247.39" fill="#f2faf6"/><rect x="559.25" y="400.70" width="1.45" height="249.50" fill="#2ca875"/><rect x="560.70" y="401.30" width="0.73" height="248.90" fill="#96d5b9"/><rect x="561.43" y="401.30" width="0.52" height="248.90" fill="#f2faf6"/><rect x="561.96" y="400.80" width="1.89" height="249.40" fill="#2ca875"/><rect x="563.84" y="401.40" width="0.28" height="248.80" fill="#87cfb0"/><rect x="564.12" y="401.40" width="0.54" height="248.80" fill="#f2faf6"/><rect x="564.67" y="401.93" width="1.71" height="248.27" fill="#2ca875"/><rect x="566.37" y="402.53" width="0.64" height="247.67" fill="#47b886"/><rect x="567.01" y="402.53" width="0.35" height="247.67" fill="#f2faf6"/><rect x="567.38" y="405.34" width="1.77" height="244.86" fill="#2ca875"/><rect x="569.15" y="405.94" width="0.49" height="244.26" fill="#a3d9c1"/><rect x="569.64" y="405.94" width="0.44" height="244.26" fill="#f2faf6"/><rect x="570.08" y="402.39" width="1.91" height="247.81" fill="#2ca875"/><rect x="572.00" y="402.99" width="0.28" height="247.21" fill="#5bbf93"/><rect x="572.28" y="402.99" width="0.50" height="247.21" fill="#f2faf6"/><rect x="572.79" y="401.39" width="1.54" height="248.81" fill="#2ca875"/><rect x="574.33" y="401.99" width="0.78" height="248.21" fill="#80cdab"/><rect x="575.12" y="401.99" width="0.38" height="248.21" fill="#f2faf6"/><rect x="575.50" y="401.43" width="1.62" height="248.77" fill="#2ca875"/><rect x="577.12" y="402.03" width="0.73" height="248.17" fill="#a1d8c0"/><rect x="577.85" y="402.03" width="0.35" height="248.17" fill="#f2faf6"/><rect x="578.21" y="401.95" width="1.65" height="248.25" fill="#2ca875"/><rect x="579.86" y="402.55" width="0.60" height="247.65" fill="#a0d8bf"/><rect x="580.46" y="402.55" width="0.45" height="247.65" fill="#f2faf6"/><rect x="580.92" y="402.31" width="1.94" height="247.89" fill="#2ca875"/><rect x="582.86" y="402.91" width="0.32" height="247.29" fill="#7bcba8"/><rect x="583.18" y="402.91" width="0.43" height="247.29" fill="#f2faf6"/><rect x="583.62" y="402.88" width="1.36" height="247.32" fill="#2ca875"/><rect x="584.99" y="403.48" width="0.92" height="246.72" fill="#58be91"/><rect x="585.91" y="403.48" width="0.42" height="246.72" fill="#f2faf6"/><rect x="586.33" y="400.02" width="1.87" height="250.18" fill="#2ca875"/><rect x="588.20" y="400.62" width="0.47" height="249.58" fill="#75c9a4"/><rect x="588.67" y="400.62" width="0.36" height="249.58" fill="#f2faf6"/><rect x="589.04" y="403.99" width="1.71" height="246.21" fill="#2ca875"/><rect x="590.75" y="404.59" width="0.59" height="245.61" fill="#79caa7"/><rect x="591.35" y="404.59" width="0.39" height="245.61" fill="#f2faf6"/><rect x="591.75" y="403.05" width="1.86" height="247.15" fill="#2ca875"/><rect x="593.61" y="403.65" width="0.49" height="246.55" fill="#7ecca9"/><rect x="594.10" y="403.65" width="0.35" height="246.55" fill="#f2faf6"/><rect x="594.46" y="401.37" width="1.53" height="248.83" fill="#2ca875"/><rect x="595.99" y="401.97" width="0.68" height="248.23" fill="#78caa6"/><rect x="596.67" y="401.97" width="0.49" height="248.23" fill="#f2faf6"/><rect x="597.17" y="403.09" width="1.84" height="247.11" fill="#2ca875"/><rect x="599.01" y="403.69" width="0.34" height="246.51" fill="#72c7a2"/><rect x="599.35" y="403.69" width="0.52" height="246.51" fill="#f2faf6"/><rect x="599.88" y="403.37" width="1.68" height="246.83" fill="#2ca875"/><rect x="601.55" y="403.97" width="0.59" height="246.23" fill="#8bd0b2"/><rect x="602.14" y="403.97" width="0.43" height="246.23" fill="#f2faf6"/><rect x="602.58" y="402.49" width="1.70" height="247.71" fill="#2ca875"/><rect x="604.28" y="403.09" width="0.58" height="247.11" fill="#a4d9c2"/><rect x="604.86" y="403.09" width="0.43" height="247.11" fill="#f2faf6"/><rect x="605.29" y="403.85" width="1.92" height="246.35" fill="#2ca875"/><rect x="607.21" y="404.45" width="0.25" height="245.75" fill="#5fc196"/><rect x="607.46" y="404.45" width="0.53" height="245.75" fill="#f2faf6"/><rect x="608.00" y="403.08" width="1.96" height="247.12" fill="#2ca875"/><rect x="609.96" y="403.68" width="0.23" height="246.52" fill="#53bc8e"/><rect x="610.19" y="403.68" width="0.51" height="246.52" fill="#f2faf6"/><rect x="610.71" y="400.67" width="1.64" height="249.53" fill="#2ca875"/><rect x="612.34" y="401.27" width="0.72" height="248.93" fill="#5ec095"/><rect x="613.07" y="401.27" width="0.34" height="248.93" fill="#f2faf6"/><rect x="613.42" y="400.40" width="1.78" height="249.80" fill="#2ca875"/><rect x="615.20" y="401.00" width="0.42" height="249.20" fill="#9fd8bf"/><rect x="615.62" y="401.00" width="0.49" height="249.20" fill="#f2faf6"/><rect x="616.12" y="400.85" width="1.81" height="249.35" fill="#2ca875"/><rect x="617.94" y="401.45" width="0.42" height="248.75" fill="#54bd8f"/><rect x="618.36" y="401.45" width="0.47" height="248.75" fill="#f2faf6"/><rect x="618.83" y="404.86" width="1.98" height="245.34" fill="#2ca875"/><rect x="620.81" y="405.46" width="0.35" height="244.74" fill="#a5dac2"/><rect x="621.16" y="405.46" width="0.37" height="244.74" fill="#f2faf6"/><rect x="621.54" y="402.19" width="1.67" height="248.01" fill="#2ca875"/><rect x="623.21" y="402.79" width="0.50" height="247.41" fill="#99d5bb"/><rect x="623.70" y="402.79" width="0.54" height="247.41" fill="#f2faf6"/><rect x="624.25" y="400.89" width="1.63" height="249.31" fill="#2ca875"/><rect x="625.88" y="401.49" width="0.64" height="248.71" fill="#67c49b"/><rect x="626.51" y="401.49" width="0.44" height="248.71" fill="#f2faf6"/><rect x="626.96" y="401.08" width="1.56" height="249.12" fill="#2ca875"/><rect x="628.51" y="401.68" width="0.66" height="248.52" fill="#47b887"/><rect x="629.18" y="401.68" width="0.48" height="248.52" fill="#f2faf6"/><rect x="629.67" y="403.05" width="1.64" height="247.15" fill="#2ca875"/><rect x="631.30" y="403.65" width="0.74" height="246.55" fill="#67c39b"/><rect x="632.04" y="403.65" width="0.33" height="246.55" fill="#f2faf6"/><rect x="632.38" y="403.43" width="1.68" height="246.77" fill="#2ca875"/><rect x="634.06" y="404.03" width="0.68" height="246.17" fill="#a8dbc5"/><rect x="634.74" y="404.03" width="0.34" height="246.17" fill="#f2faf6"/><rect x="635.08" y="404.34" width="1.98" height="245.86" fill="#2ca875"/><rect x="637.06" y="404.94" width="0.37" height="245.26" fill="#60c196"/><rect x="637.44" y="404.94" width="0.35" height="245.26" fill="#f2faf6"/><rect x="637.79" y="400.22" width="1.85" height="249.98" fill="#2ca875"/><rect x="639.65" y="400.82" width="0.46" height="249.38" fill="#52bc8e"/><rect x="640.11" y="400.82" width="0.38" height="249.38" fill="#f2faf6"/><rect x="640.50" y="402.32" width="1.94" height="247.88" fill="#2ca875"/><rect x="642.44" y="402.92" width="0.26" height="247.28" fill="#5fc196"/><rect x="642.70" y="402.92" width="0.50" height="247.28" fill="#f2faf6"/><rect x="643.21" y="400.82" width="1.95" height="249.38" fill="#2ca875"/><rect x="645.15" y="401.42" width="0.31" height="248.78" fill="#8cd1b2"/><rect x="645.46" y="401.42" width="0.45" height="248.78" fill="#f2faf6"/><rect x="645.92" y="400.49" width="1.39" height="249.71" fill="#2ca875"/><rect x="647.30" y="401.09" width="0.84" height="249.11" fill="#70c7a1"/><rect x="648.14" y="401.09" width="0.47" height="249.11" fill="#f2faf6"/><rect x="648.62" y="400.40" width="1.96" height="249.80" fill="#2ca875"/><rect x="650.58" y="401.00" width="0.28" height="249.20" fill="#96d4b9"/><rect x="650.86" y="401.00" width="0.46" height="249.20" fill="#f2faf6"/><rect x="651.33" y="400.46" width="1.90" height="249.74" fill="#2ca875"/><rect x="653.24" y="401.06" width="0.46" height="249.14" fill="#9cd7bd"/><rect x="653.69" y="401.06" width="0.34" height="249.14" fill="#f2faf6"/><rect x="654.04" y="402.50" width="1.57" height="247.70" fill="#2ca875"/><rect x="655.61" y="403.10" width="0.69" height="247.10" fill="#a2d9c1"/><rect x="656.30" y="403.10" width="0.44" height="247.10" fill="#f2faf6"/><rect x="656.75" y="401.47" width="1.43" height="248.73" fill="#2ca875"/><rect x="658.18" y="402.07" width="0.83" height="248.13" fill="#5dc095"/><rect x="659.01" y="402.07" width="0.44" height="248.13" fill="#f2faf6"/><rect x="659.46" y="400.60" width="1.45" height="249.60" fill="#2ca875"/><rect x="660.91" y="401.20" width="0.91" height="249.00" fill="#5abf92"/><rect x="661.82" y="401.20" width="0.33" height="249.00" fill="#f2faf6"/><rect x="662.17" y="401.72" width="1.55" height="248.48" fill="#2ca875"/><rect x="663.71" y="402.32" width="0.66" height="247.88" fill="#62c298"/><rect x="664.38" y="402.32" width="0.49" height="247.88" fill="#f2faf6"/><rect x="664.88" y="402.75" width="1.47" height="247.45" fill="#2ca875"/><rect x="666.34" y="403.35" width="0.84" height="246.85" fill="#47b887"/><rect x="667.18" y="403.35" width="0.40" height="246.85" fill="#f2faf6"/><rect x="667.58" y="401.38" width="1.36" height="248.82" fill="#2ca875"/><rect x="668.94" y="401.98" width="0.86" height="248.22" fill="#7dcba9"/><rect x="669.80" y="401.98" width="0.48" height="248.22" fill="#f2faf6"/><rect x="670.29" y="401.04" width="1.66" height="249.16" fill="#2ca875"/><rect x="671.95" y="401.64" width="0.52" height="248.56" fill="#50bb8c"/><rect x="672.47" y="401.64" width="0.53" height="248.56" fill="#f2faf6"/><rect x="673.00" y="404.50" width="1.63" height="245.70" fill="#2ca875"/><rect x="674.63" y="405.10" width="0.64" height="245.10" fill="#99d6bb"/><rect x="675.27" y="405.10" width="0.43" height="245.10" fill="#f2faf6"/><rect x="675.71" y="402.16" width="1.68" height="248.04" fill="#2ca875"/><rect x="677.39" y="402.76" width="0.55" height="247.44" fill="#a8dbc4"/><rect x="677.94" y="402.76" width="0.47" height="247.44" fill="#f2faf6"/><rect x="678.42" y="401.88" width="1.89" height="248.32" fill="#2ca875"/><rect x="680.31" y="402.48" width="0.33" height="247.72" fill="#85ceae"/><rect x="680.64" y="402.48" width="0.48" height="247.72" fill="#f2faf6"/><rect x="681.12" y="402.23" width="1.58" height="247.97" fill="#2ca875"/><rect x="682.70" y="402.83" width="0.79" height="247.37" fill="#52bc8e"/><rect x="683.49" y="402.83" width="0.34" height="247.37" fill="#f2faf6"/><rect x="683.83" y="400.39" width="1.83" height="249.81" fill="#2ca875"/><rect x="685.66" y="400.99" width="0.49" height="249.21" fill="#56bd90"/><rect x="686.15" y="400.99" width="0.38" height="249.21" fill="#f2faf6"/><rect x="686.54" y="400.46" width="1.90" height="249.74" fill="#2ca875"/><rect x="688.44" y="401.06" width="0.29" height="249.14" fill="#89d0b0"/><rect x="688.73" y="401.06" width="0.51" height="249.14" fill="#f2faf6"/><rect x="689.25" y="401.55" width="1.51" height="248.65" fill="#2ca875"/><rect x="690.76" y="402.15" width="0.81" height="248.05" fill="#73c8a3"/><rect x="691.56" y="402.15" width="0.39" height="248.05" fill="#f2faf6"/><rect x="691.96" y="400.87" width="1.64" height="249.33" fill="#2ca875"/><rect x="693.60" y="401.47" width="0.68" height="248.73" fill="#a6dac3"/><rect x="694.28" y="401.47" width="0.38" height="248.73" fill="#f2faf6"/><rect x="694.67" y="405.35" width="1.70" height="244.85" fill="#2ca875"/><rect x="696.37" y="405.95" width="0.62" height="244.25" fill="#a6dac3"/><rect x="696.99" y="405.95" width="0.38" height="244.25" fill="#f2faf6"/><rect x="697.38" y="401.70" width="1.58" height="248.50" fill="#2ca875"/><rect x="698.96" y="402.30" width="0.79" height="247.90" fill="#6cc59e"/><rect x="699.75" y="402.30" width="0.32" height="247.90" fill="#f2faf6"/><rect x="700.08" y="402.61" width="1.68" height="247.59" fill="#2ca875"/><rect x="701.76" y="403.21" width="0.66" height="246.99" fill="#78caa6"/><rect x="702.42" y="403.21" width="0.37" height="246.99" fill="#f2faf6"/><rect x="702.79" y="400.03" width="1.52" height="250.17" fill="#2ca875"/><rect x="704.31" y="400.63" width="0.84" height="249.57" fill="#6dc69f"/><rect x="705.15" y="400.63" width="0.34" height="249.57" fill="#f2faf6"/><rect x="705.50" y="400.23" width="1.36" height="249.97" fill="#2ca875"/><rect x="706.86" y="400.83" width="0.95" height="249.37" fill="#5dc094"/><rect x="707.81" y="400.83" width="0.39" height="249.37" fill="#f2faf6"/><rect x="708.21" y="403.22" width="1.69" height="246.98" fill="#2ca875"/><rect x="709.90" y="403.82" width="0.52" height="246.38" fill="#87cfb0"/><rect x="710.42" y="403.82" width="0.49" height="246.38" fill="#f2faf6"/><rect x="710.92" y="403.94" width="1.92" height="246.26" fill="#2ca875"/><rect x="712.84" y="404.54" width="0.37" height="245.66" fill="#66c39a"/><rect x="713.21" y="404.54" width="0.41" height="245.66" fill="#f2faf6"/><rect x="713.62" y="405.42" width="1.45" height="244.78" fill="#2ca875"/><rect x="715.07" y="406.02" width="0.77" height="244.18" fill="#86cfaf"/><rect x="715.84" y="406.02" width="0.48" height="244.18" fill="#f2faf6"/><rect x="716.33" y="400.24" width="1.89" height="249.96" fill="#2ca875"/><rect x="718.22" y="400.84" width="0.29" height="249.36" fill="#84ceae"/><rect x="718.52" y="400.84" width="0.52" height="249.36" fill="#f2faf6"/><rect x="719.04" y="404.04" width="1.88" height="246.16" fill="#2ca875"/><rect x="720.92" y="404.64" width="0.47" height="245.56" fill="#7acaa7"/><rect x="721.39" y="404.64" width="0.35" height="245.56" fill="#f2faf6"/><rect x="721.75" y="402.77" width="1.89" height="247.43" fill="#2ca875"/><rect x="723.64" y="403.37" width="0.31" height="246.83" fill="#98d5ba"/><rect x="723.95" y="403.37" width="0.50" height="246.83" fill="#f2faf6"/><rect x="724.46" y="403.21" width="1.93" height="246.99" fill="#2ca875"/><rect x="726.39" y="403.81" width="0.30" height="246.39" fill="#8bd0b2"/><rect x="726.69" y="403.81" width="0.47" height="246.39" fill="#f2faf6"/><rect x="727.17" y="401.26" width="1.37" height="248.94" fill="#2ca875"/><rect x="728.54" y="401.86" width="0.98" height="248.34" fill="#6ac49d"/><rect x="729.51" y="401.86" width="0.35" height="248.34" fill="#f2faf6"/><rect x="729.88" y="400.58" width="1.89" height="249.62" fill="#2ca875"/><rect x="731.77" y="401.18" width="0.36" height="249.02" fill="#84ceae"/><rect x="732.13" y="401.18" width="0.44" height="249.02" fill="#f2faf6"/><rect x="732.58" y="403.44" width="1.79" height="246.76" fill="#2ca875"/><rect x="734.37" y="404.04" width="0.48" height="246.16" fill="#46b886"/><rect x="734.85" y="404.04" width="0.43" height="246.16" fill="#f2faf6"/><rect x="735.29" y="404.39" width="1.83" height="245.81" fill="#2ca875"/><rect x="737.13" y="404.99" width="0.43" height="245.21" fill="#7bcba8"/><rect x="737.56" y="404.99" width="0.43" height="245.21" fill="#f2faf6"/><rect x="413" y="647.7" width="325" height="2.5" fill="#2ca875"/><rect x="414" y="650" width="324" height="1" fill="#8c8c8c"/><rect x="430.0" y="650.2" width="1" height="4" fill="#6e7079"/><rect x="456.9" y="650.2" width="1" height="4" fill="#6e7079"/><rect x="483.8" y="650.2" width="1" height="4" fill="#6e7079"/><rect x="510.7" y="650.2" width="1" height="4" fill="#6e7079"/><rect x="537.6" y="650.2" width="1" height="4" fill="#6e7079"/><rect x="564.5" y="650.2" width="1" height="4" fill="#6e7079"/><rect x="591.4" y="650.2" width="1" height="4" fill="#6e7079"/><rect x="618.3" y="650.2" width="1" height="4" fill="#6e7079"/><rect x="645.2" y="650.2" width="1" height="4" fill="#6e7079"/><rect x="672.1" y="650.2" width="1" height="4" fill="#6e7079"/><rect x="699.0" y="650.2" width="1" height="4" fill="#6e7079"/><rect x="725.9" y="650.2" width="1" height="4" fill="#6e7079"/></svg></div>
<div class="t" style="left:327.6px;width:80px;text-align:right;top:396.34px;font-size:10px;color:#6e7079">1200.00</div>
<div class="t" style="left:327.6px;width:80px;text-align:right;top:437.74px;font-size:10px;color:#6e7079">1000.00</div>
<div class="t" style="left:327.6px;width:80px;text-align:right;top:479.14px;font-size:10px;color:#6e7079">800.00</div>
<div class="t" style="left:327.6px;width:80px;text-align:right;top:520.53px;font-size:10px;color:#6e7079">600.00</div>
<div class="t" style="left:327.6px;width:80px;text-align:right;top:561.93px;font-size:10px;color:#6e7079">400.00</div>
<div class="t" style="left:327.6px;width:80px;text-align:right;top:603.33px;font-size:10px;color:#6e7079">200.00</div>
<div class="t" style="left:327.6px;width:80px;text-align:right;top:644.73px;font-size:10px;color:#6e7079">0.01</div>
<div class="t" style="left:400.50px;width:60px;text-align:center;top:655.83px;font-size:10px;color:#6e7079">14:50</div>
<div class="t" style="left:427.40px;width:60px;text-align:center;top:655.83px;font-size:10px;color:#6e7079">14:55</div>
<div class="t" style="left:454.30px;width:60px;text-align:center;top:655.83px;font-size:10px;color:#6e7079">15:00</div>
<div class="t" style="left:481.20px;width:60px;text-align:center;top:655.83px;font-size:10px;color:#6e7079">15:05</div>
<div class="t" style="left:508.10px;width:60px;text-align:center;top:655.83px;font-size:10px;color:#6e7079">15:10</div>
<div class="t" style="left:535.00px;width:60px;text-align:center;top:655.83px;font-size:10px;color:#6e7079">15:15</div>
<div class="t" style="left:561.90px;width:60px;text-align:center;top:655.83px;font-size:10px;color:#6e7079">15:20</div>
<div class="t" style="left:588.80px;width:60px;text-align:center;top:655.83px;font-size:10px;color:#6e7079">15:25</div>
<div class="t" style="left:615.70px;width:60px;text-align:center;top:655.83px;font-size:10px;color:#6e7079">15:30</div>
<div class="t" style="left:642.60px;width:60px;text-align:center;top:655.83px;font-size:10px;color:#6e7079">15:35</div>
<div class="t" style="left:669.50px;width:60px;text-align:center;top:655.83px;font-size:10px;color:#6e7079">15:40</div>
<div class="t" style="left:696.40px;width:60px;text-align:center;top:655.83px;font-size:10px;color:#6e7079">15:45</div>
<div class="t" style="left:380.80px;top:656.79px;font-size:10.6px;font-weight:400;color:#2d5fd8;font-style:italic;">Hour</div>
<div class="r" style="left:783px;top:293px;width:423px;height:424px;background:#fff;border-radius:6px;box-shadow:0 1px 4px rgba(30,40,90,0.10)"></div>
<div class="t" style="left:803.10px;top:319.11px;font-size:14.1px;font-weight:400;color:#12163a;letter-spacing:0.22px;-webkit-text-stroke:0.25px #12163a;">Aggregate Memory Utilization</div>
<div class="r" style="left:1093.7px;top:312px;width:66px;height:27px;background:#fff;border:1px solid #e1e2ea;border-radius:5px;overflow:hidden"><div style="position:absolute;left:0;top:0;width:32px;height:27px;background:#eceefb"></div></div>
<svg style="left:1104.2px;top:319px" width="13" height="13" viewBox="0 0 13 13"><path d="M1.5 0.8 L1.5 11.5 L12 11.5" fill="none" stroke="#a4a9d4" stroke-width="0.9"/><path d="M3.3 8.2 L5.6 5.4 L7.5 7 L10.8 3.6" fill="none" stroke="#a4a9d4" stroke-width="1"/></svg>
<svg style="left:1136.2px;top:319px" width="13" height="13" viewBox="0 0 13 13"><path d="M6 1.7 A5 5 0 1 0 11.2 6.8" fill="none" stroke="#a4a9d4" stroke-width="1.2"/><path d="M7.2 0.6 A5.4 5.4 0 0 1 12.2 5.6 L7.2 5.6Z" fill="#a4a9d4"/></svg>
<svg style="left:1172px;top:317px" width="16" height="16" viewBox="0 0 16 16"><circle cx="8" cy="8" r="6.8" fill="none" stroke="#bcc7ec" stroke-width="1"/><ellipse cx="8.7" cy="5.4" rx="1.25" ry="0.85" fill="#a5b3df"/><path d="M7.5 7.2 L9.5 7.2 L8.5 11.6 L6.5 11.6 Z" fill="#a5b3df"/></svg>
<div class="r" style="left:1115px;top:362px;width:19px;height:19px;background:#46b982;border-radius:3px"></div>
<div class="t" style="left:1117.80px;top:366.74px;font-size:9.6px;font-weight:400;color:#fff;letter-spacing:-0.2px;-webkit-text-stroke:0.35px #fff;">1hr</div>
<div class="t" style="left:1144.60px;top:366.48px;font-size:9.9px;font-weight:400;color:#4a4f6e;letter-spacing:-0.1px;">5hr</div>
<div class="t" style="left:1172.30px;top:366.48px;font-size:9.9px;font-weight:400;color:#4a4f6e;letter-spacing:-0.6px;">1w</div>
<div class="t" style="left:840.00px;top:385.19px;font-size:10.6px;font-weight:400;color:#2d5fd8;font-style:italic;">MiB</div>
<div class="r" style="left:0;top:0;width:1366px;height:768px;pointer-events:none"><svg style="left:0;top:0" width="1366" height="768" viewBox="0 0 1366 768"><rect x="856" y="435" width="326" height="1" fill="#e8e8e8"/><rect x="856" y="479" width="326" height="1" fill="#e8e8e8"/><rect x="856" y="523" width="326" height="1" fill="#e8e8e8"/><rect x="856" y="566" width="326" height="1" fill="#e8e8e8"/><rect x="856" y="609" width="326" height="1" fill="#e8e8e8"/><rect x="856" y="651" width="326" height="1" fill="#e8e8e8"/><rect x="873.1" y="401.7" width="1" height="252.90000000000003" fill="#eeeeee"/><rect x="900.0" y="401.7" width="1" height="252.90000000000003" fill="#eeeeee"/><rect x="926.9" y="401.7" width="1" height="252.90000000000003" fill="#eeeeee"/><rect x="953.8" y="401.7" width="1" height="252.90000000000003" fill="#eeeeee"/><rect x="980.7" y="401.7" width="1" height="252.90000000000003" fill="#eeeeee"/><rect x="1007.6" y="401.7" width="1" height="252.90000000000003" fill="#eeeeee"/><rect x="1034.5" y="401.7" width="1" height="252.90000000000003" fill="#eeeeee"/><rect x="1061.4" y="401.7" width="1" height="252.90000000000003" fill="#eeeeee"/><rect x="1088.3" y="401.7" width="1" height="252.90000000000003" fill="#eeeeee"/><rect x="1115.2" y="401.7" width="1" height="252.90000000000003" fill="#eeeeee"/><rect x="1142.1" y="401.7" width="1" height="252.90000000000003" fill="#eeeeee"/><rect x="1169.0" y="401.7" width="1" height="252.90000000000003" fill="#eeeeee"/><rect x="856.00" y="402.06" width="1.00" height="252.54" fill="#006b66"/><rect x="857.00" y="402.66" width="1.23" height="251.94" fill="#5ea09c"/><rect x="858.23" y="402.66" width="0.49" height="251.94" fill="#e6f2f1"/><rect x="858.72" y="401.65" width="1.05" height="252.95" fill="#006b66"/><rect x="859.77" y="402.25" width="1.18" height="252.35" fill="#5b9d9a"/><rect x="860.95" y="402.25" width="0.48" height="252.35" fill="#e6f2f1"/><rect x="861.43" y="402.12" width="1.24" height="252.48" fill="#006b66"/><rect x="862.68" y="402.72" width="1.04" height="251.88" fill="#68a6a3"/><rect x="863.72" y="402.72" width="0.43" height="251.88" fill="#e6f2f1"/><rect x="864.15" y="401.94" width="1.16" height="252.66" fill="#006b66"/><rect x="865.31" y="402.54" width="1.06" height="252.06" fill="#79b1ae"/><rect x="866.37" y="402.54" width="0.49" height="252.06" fill="#e6f2f1"/><rect x="866.87" y="402.05" width="1.00" height="252.55" fill="#006b66"/><rect x="867.87" y="402.65" width="1.36" height="251.95" fill="#5ea09c"/><rect x="869.23" y="402.65" width="0.36" height="251.95" fill="#e6f2f1"/><rect x="869.58" y="402.12" width="1.06" height="252.48" fill="#006b66"/><rect x="870.64" y="402.72" width="1.21" height="251.88" fill="#4c9490"/><rect x="871.85" y="402.72" width="0.45" height="251.88" fill="#e6f2f1"/><rect x="872.30" y="401.64" width="1.05" height="252.96" fill="#006b66"/><rect x="873.35" y="402.24" width="1.19" height="252.36" fill="#7fb5b2"/><rect x="874.54" y="402.24" width="0.47" height="252.36" fill="#e6f2f1"/><rect x="875.02" y="402.07" width="1.06" height="252.53" fill="#006b66"/><rect x="876.07" y="402.67" width="1.22" height="251.93" fill="#6eaaa7"/><rect x="877.30" y="402.67" width="0.44" height="251.93" fill="#e6f2f1"/><rect x="877.73" y="401.93" width="1.01" height="252.67" fill="#006b66"/><rect x="878.74" y="402.53" width="1.19" height="252.07" fill="#5a9d99"/><rect x="879.93" y="402.53" width="0.52" height="252.07" fill="#e6f2f1"/><rect x="880.45" y="402.28" width="1.23" height="252.32" fill="#006b66"/><rect x="881.68" y="402.88" width="1.15" height="251.72" fill="#6daaa6"/><rect x="882.84" y="402.88" width="0.33" height="251.72" fill="#e6f2f1"/><rect x="883.17" y="402.17" width="1.24" height="252.43" fill="#006b66"/><rect x="884.41" y="402.77" width="1.05" height="251.83" fill="#5fa09d"/><rect x="885.46" y="402.77" width="0.42" height="251.83" fill="#e6f2f1"/><rect x="885.88" y="401.75" width="1.23" height="252.85" fill="#006b66"/><rect x="887.12" y="402.35" width="1.11" height="252.25" fill="#77afad"/><rect x="888.23" y="402.35" width="0.37" height="252.25" fill="#e6f2f1"/><rect x="888.60" y="401.70" width="1.12" height="252.90" fill="#006b66"/><rect x="889.72" y="402.30" width="1.06" height="252.30" fill="#559a96"/><rect x="890.78" y="402.30" width="0.53" height="252.30" fill="#e6f2f1"/><rect x="891.32" y="402.17" width="1.12" height="252.43" fill="#006b66"/><rect x="892.43" y="402.77" width="1.08" height="251.83" fill="#80b5b3"/><rect x="893.51" y="402.77" width="0.52" height="251.83" fill="#e6f2f1"/><rect x="894.03" y="401.76" width="1.22" height="252.84" fill="#006b66"/><rect x="895.26" y="402.36" width="1.06" height="252.24" fill="#4d9591"/><rect x="896.32" y="402.36" width="0.43" height="252.24" fill="#e6f2f1"/><rect x="896.75" y="401.60" width="1.11" height="253.00" fill="#006b66"/><rect x="897.86" y="402.20" width="1.18" height="252.40" fill="#62a29f"/><rect x="899.04" y="402.20" width="0.42" height="252.40" fill="#e6f2f1"/><rect x="899.47" y="401.70" width="1.07" height="252.90" fill="#006b66"/><rect x="900.54" y="402.30" width="1.25" height="252.30" fill="#8abcba"/><rect x="901.79" y="402.30" width="0.39" height="252.30" fill="#e6f2f1"/><rect x="902.18" y="401.60" width="1.18" height="253.00" fill="#006b66"/><rect x="903.37" y="402.20" width="1.03" height="252.40" fill="#549996"/><rect x="904.39" y="402.20" width="0.51" height="252.40" fill="#e6f2f1"/><rect x="904.90" y="402.25" width="1.17" height="252.35" fill="#006b66"/><rect x="906.07" y="402.85" width="1.02" height="251.75" fill="#61a19e"/><rect x="907.09" y="402.85" width="0.52" height="251.75" fill="#e6f2f1"/><rect x="907.62" y="401.86" width="1.08" height="252.74" fill="#006b66"/><rect x="908.70" y="402.46" width="1.09" height="252.14" fill="#77b0ad"/><rect x="909.79" y="402.46" width="0.54" height="252.14" fill="#e6f2f1"/><rect x="910.33" y="401.85" width="1.09" height="252.75" fill="#006b66"/><rect x="911.43" y="402.45" width="1.24" height="252.15" fill="#4f9692"/><rect x="912.66" y="402.45" width="0.39" height="252.15" fill="#e6f2f1"/><rect x="913.05" y="401.67" width="1.20" height="252.93" fill="#006b66"/><rect x="914.25" y="402.27" width="1.12" height="252.33" fill="#91c0be"/><rect x="915.38" y="402.27" width="0.39" height="252.33" fill="#e6f2f1"/><rect x="915.77" y="401.77" width="1.05" height="252.83" fill="#006b66"/><rect x="916.82" y="402.37" width="1.23" height="252.23" fill="#5a9d99"/><rect x="918.05" y="402.37" width="0.44" height="252.23" fill="#e6f2f1"/><rect x="918.48" y="401.86" width="1.24" height="252.74" fill="#006b66"/><rect x="919.72" y="402.46" width="0.96" height="252.14" fill="#88bab8"/><rect x="920.68" y="402.46" width="0.52" height="252.14" fill="#e6f2f1"/><rect x="921.20" y="402.04" width="1.23" height="252.56" fill="#006b66"/><rect x="922.43" y="402.64" width="0.96" height="251.96" fill="#74aeab"/><rect x="923.39" y="402.64" width="0.53" height="251.96" fill="#e6f2f1"/><rect x="923.92" y="402.10" width="0.99" height="252.50" fill="#006b66"/><rect x="924.91" y="402.70" width="1.24" height="251.90" fill="#6da9a6"/><rect x="926.15" y="402.70" width="0.49" height="251.90" fill="#e6f2f1"/><rect x="926.63" y="402.13" width="1.15" height="252.47" fill="#006b66"/><rect x="927.79" y="402.73" width="1.18" height="251.87" fill="#4f9692"/><rect x="928.96" y="402.73" width="0.39" height="251.87" fill="#e6f2f1"/><rect x="929.35" y="402.25" width="1.01" height="252.35" fill="#006b66"/><rect x="930.36" y="402.85" width="1.28" height="251.75" fill="#65a4a1"/><rect x="931.64" y="402.85" width="0.43" height="251.75" fill="#e6f2f1"/><rect x="932.07" y="401.81" width="1.18" height="252.79" fill="#006b66"/><rect x="933.25" y="402.41" width="1.00" height="252.19" fill="#5fa09d"/><rect x="934.25" y="402.41" width="0.54" height="252.19" fill="#e6f2f1"/><rect x="934.78" y="402.06" width="1.06" height="252.54" fill="#006b66"/><rect x="935.84" y="402.66" width="1.21" height="251.94" fill="#69a6a3"/><rect x="937.05" y="402.66" width="0.45" height="251.94" fill="#e6f2f1"/><rect x="937.50" y="401.72" width="1.02" height="252.88" fill="#006b66"/><rect x="938.52" y="402.32" width="1.32" height="252.28" fill="#8fbfbd"/><rect x="939.85" y="402.32" width="0.37" height="252.28" fill="#e6f2f1"/><rect x="940.22" y="401.95" width="1.04" height="252.65" fill="#006b66"/><rect x="941.25" y="402.55" width="1.16" height="252.05" fill="#95c3c1"/><rect x="942.41" y="402.55" width="0.52" height="252.05" fill="#e6f2f1"/><rect x="942.93" y="401.91" width="1.02" height="252.69" fill="#006b66"/><rect x="943.95" y="402.51" width="1.33" height="252.09" fill="#529894"/><rect x="945.28" y="402.51" width="0.37" height="252.09" fill="#e6f2f1"/><rect x="945.65" y="401.84" width="1.00" height="252.76" fill="#006b66"/><rect x="946.65" y="402.44" width="1.34" height="252.16" fill="#5fa09c"/><rect x="947.99" y="402.44" width="0.38" height="252.16" fill="#e6f2f1"/><rect x="948.37" y="402.00" width="1.22" height="252.60" fill="#006b66"/><rect x="949.59" y="402.60" width="1.01" height="252.00" fill="#6aa7a4"/><rect x="950.59" y="402.60" width="0.49" height="252.00" fill="#e6f2f1"/><rect x="951.08" y="401.89" width="1.12" height="252.71" fill="#006b66"/><rect x="952.20" y="402.49" width="1.19" height="252.11" fill="#65a4a0"/><rect x="953.39" y="402.49" width="0.41" height="252.11" fill="#e6f2f1"/><rect x="953.80" y="401.64" width="1.05" height="252.96" fill="#006b66"/><rect x="954.85" y="402.24" width="1.13" height="252.36" fill="#559a96"/><rect x="955.98" y="402.24" width="0.54" height="252.36" fill="#e6f2f1"/><rect x="956.52" y="401.95" width="1.15" height="252.65" fill="#006b66"/><rect x="957.67" y="402.55" width="1.05" height="252.05" fill="#5b9e9a"/><rect x="958.72" y="402.55" width="0.51" height="252.05" fill="#e6f2f1"/><rect x="959.23" y="401.79" width="1.05" height="252.81" fill="#006b66"/><rect x="960.28" y="402.39" width="1.26" height="252.21" fill="#6ca9a6"/><rect x="961.54" y="402.39" width="0.41" height="252.21" fill="#e6f2f1"/><rect x="961.95" y="402.27" width="1.21" height="252.33" fill="#006b66"/><rect x="963.16" y="402.87" width="0.99" height="251.73" fill="#4d9591"/><rect x="964.15" y="402.87" width="0.52" height="251.73" fill="#e6f2f1"/><rect x="964.67" y="401.62" width="1.17" height="252.98" fill="#006b66"/><rect x="965.84" y="402.22" width="1.03" height="252.38" fill="#6faaa7"/><rect x="966.86" y="402.22" width="0.52" height="252.38" fill="#e6f2f1"/><rect x="967.38" y="402.01" width="0.98" height="252.59" fill="#006b66"/><rect x="968.36" y="402.61" width="1.33" height="251.99" fill="#90c0be"/><rect x="969.69" y="402.61" width="0.41" height="251.99" fill="#e6f2f1"/><rect x="970.10" y="402.18" width="1.21" height="252.42" fill="#006b66"/><rect x="971.31" y="402.78" width="0.97" height="251.82" fill="#5e9f9c"/><rect x="972.28" y="402.78" width="0.54" height="251.82" fill="#e6f2f1"/><rect x="972.82" y="401.68" width="1.02" height="252.92" fill="#006b66"/><rect x="973.84" y="402.28" width="1.26" height="252.32" fill="#7eb4b2"/><rect x="975.09" y="402.28" width="0.44" height="252.32" fill="#e6f2f1"/><rect x="975.53" y="402.26" width="1.17" height="252.34" fill="#006b66"/><rect x="976.71" y="402.86" width="1.08" height="251.74" fill="#84b8b6"/><rect x="977.78" y="402.86" width="0.47" height="251.74" fill="#e6f2f1"/><rect x="978.25" y="401.92" width="1.13" height="252.68" fill="#006b66"/><rect x="979.38" y="402.52" width="1.25" height="252.08" fill="#85b9b7"/><rect x="980.63" y="402.52" width="0.33" height="252.08" fill="#e6f2f1"/><rect x="980.97" y="401.76" width="1.23" height="252.84" fill="#006b66"/><rect x="982.19" y="402.36" width="1.02" height="252.24" fill="#62a29f"/><rect x="983.22" y="402.36" width="0.47" height="252.24" fill="#e6f2f1"/><rect x="983.68" y="401.69" width="1.05" height="252.91" fill="#006b66"/><rect x="984.73" y="402.29" width="1.21" height="252.31" fill="#7fb5b2"/><rect x="985.94" y="402.29" width="0.46" height="252.31" fill="#e6f2f1"/><rect x="986.40" y="401.68" width="1.00" height="252.92" fill="#006b66"/><rect x="987.40" y="402.28" width="1.28" height="252.32" fill="#77afad"/><rect x="988.68" y="402.28" width="0.44" height="252.32" fill="#e6f2f1"/><rect x="989.12" y="401.87" width="1.04" height="252.73" fill="#006b66"/><rect x="990.16" y="402.47" width="1.22" height="252.13" fill="#4c9490"/><rect x="991.38" y="402.47" width="0.46" height="252.13" fill="#e6f2f1"/><rect x="991.83" y="401.81" width="1.10" height="252.79" fill="#006b66"/><rect x="992.94" y="402.41" width="1.08" height="252.19" fill="#7bb2b0"/><rect x="994.02" y="402.41" width="0.53" height="252.19" fill="#e6f2f1"/><rect x="994.55" y="402.22" width="1.11" height="252.38" fill="#006b66"/><rect x="995.66" y="402.82" width="1.23" height="251.78" fill="#5e9f9c"/><rect x="996.89" y="402.82" width="0.38" height="251.78" fill="#e6f2f1"/><rect x="997.27" y="402.27" width="1.17" height="252.33" fill="#006b66"/><rect x="998.44" y="402.87" width="1.15" height="251.73" fill="#4d9591"/><rect x="999.59" y="402.87" width="0.39" height="251.73" fill="#e6f2f1"/><rect x="999.98" y="401.95" width="1.16" height="252.65" fill="#006b66"/><rect x="1001.14" y="402.55" width="1.14" height="252.05" fill="#5fa09c"/><rect x="1002.28" y="402.55" width="0.42" height="252.05" fill="#e6f2f1"/><rect x="1002.70" y="402.07" width="1.23" height="252.53" fill="#006b66"/><rect x="1003.93" y="402.67" width="1.11" height="251.93" fill="#4e9591"/><rect x="1005.04" y="402.67" width="0.38" height="251.93" fill="#e6f2f1"/><rect x="1005.42" y="401.84" width="1.09" height="252.76" fill="#006b66"/><rect x="1006.51" y="402.44" width="1.15" height="252.16" fill="#5a9d99"/><rect x="1007.66" y="402.44" width="0.47" height="252.16" fill="#e6f2f1"/><rect x="1008.13" y="402.16" width="1.18" height="252.44" fill="#006b66"/><rect x="1009.31" y="402.76" width="1.10" height="251.84" fill="#5b9d9a"/><rect x="1010.41" y="402.76" width="0.44" height="251.84" fill="#e6f2f1"/><rect x="1010.85" y="402.28" width="1.06" height="252.32" fill="#006b66"/><rect x="1011.91" y="402.88" width="1.15" height="251.72" fill="#5d9f9b"/><rect x="1013.06" y="402.88" width="0.50" height="251.72" fill="#e6f2f1"/><rect x="1013.57" y="401.76" width="1.18" height="252.84" fill="#006b66"/><rect x="1014.75" y="402.36" width="1.14" height="252.24" fill="#92c1bf"/><rect x="1015.89" y="402.36" width="0.39" height="252.24" fill="#e6f2f1"/><rect x="1016.28" y="401.95" width="1.03" height="252.65" fill="#006b66"/><rect x="1017.31" y="402.55" width="1.31" height="252.05" fill="#6aa8a4"/><rect x="1018.63" y="402.55" width="0.37" height="252.05" fill="#e6f2f1"/><rect x="1019.00" y="402.07" width="1.24" height="252.53" fill="#006b66"/><rect x="1020.24" y="402.67" width="1.12" height="251.93" fill="#69a6a3"/><rect x="1021.36" y="402.67" width="0.36" height="251.93" fill="#e6f2f1"/><rect x="1021.72" y="401.75" width="1.24" height="252.85" fill="#006b66"/><rect x="1022.96" y="402.35" width="1.12" height="252.25" fill="#4f9692"/><rect x="1024.08" y="402.35" width="0.36" height="252.25" fill="#e6f2f1"/><rect x="1024.43" y="401.64" width="1.08" height="252.96" fill="#006b66"/><rect x="1025.52" y="402.24" width="1.11" height="252.36" fill="#8dbebc"/><rect x="1026.63" y="402.24" width="0.52" height="252.36" fill="#e6f2f1"/><rect x="1027.15" y="402.11" width="1.25" height="252.49" fill="#006b66"/><rect x="1028.40" y="402.71" width="0.94" height="251.89" fill="#64a3a0"/><rect x="1029.34" y="402.71" width="0.53" height="251.89" fill="#e6f2f1"/><rect x="1029.87" y="401.73" width="1.23" height="252.87" fill="#006b66"/><rect x="1031.10" y="402.33" width="1.00" height="252.27" fill="#4e9591"/><rect x="1032.10" y="402.33" width="0.49" height="252.27" fill="#e6f2f1"/><rect x="1032.58" y="402.07" width="1.08" height="252.53" fill="#006b66"/><rect x="1033.66" y="402.67" width="1.23" height="251.93" fill="#64a3a0"/><rect x="1034.89" y="402.67" width="0.41" height="251.93" fill="#e6f2f1"/><rect x="1035.30" y="401.72" width="0.98" height="252.88" fill="#006b66"/><rect x="1036.28" y="402.32" width="1.35" height="252.28" fill="#66a4a1"/><rect x="1037.63" y="402.32" width="0.39" height="252.28" fill="#e6f2f1"/><rect x="1038.02" y="402.27" width="1.01" height="252.33" fill="#006b66"/><rect x="1039.03" y="402.87" width="1.17" height="251.73" fill="#5b9d9a"/><rect x="1040.20" y="402.87" width="0.54" height="251.73" fill="#e6f2f1"/><rect x="1040.73" y="401.85" width="1.20" height="252.75" fill="#006b66"/><rect x="1041.93" y="402.45" width="1.01" height="252.15" fill="#6ca8a5"/><rect x="1042.95" y="402.45" width="0.50" height="252.15" fill="#e6f2f1"/><rect x="1043.45" y="401.63" width="1.11" height="252.97" fill="#006b66"/><rect x="1044.56" y="402.23" width="1.20" height="252.37" fill="#90c0bd"/><rect x="1045.76" y="402.23" width="0.41" height="252.37" fill="#e6f2f1"/><rect x="1046.17" y="401.74" width="1.08" height="252.86" fill="#006b66"/><rect x="1047.24" y="402.34" width="1.12" height="252.26" fill="#4e9591"/><rect x="1048.36" y="402.34" width="0.52" height="252.26" fill="#e6f2f1"/><rect x="1048.88" y="401.89" width="1.20" height="252.71" fill="#006b66"/><rect x="1050.08" y="402.49" width="1.03" height="252.11" fill="#4f9592"/><rect x="1051.11" y="402.49" width="0.49" height="252.11" fill="#e6f2f1"/><rect x="1051.60" y="401.62" width="1.00" height="252.98" fill="#006b66"/><rect x="1052.60" y="402.22" width="1.20" height="252.38" fill="#5fa09c"/><rect x="1053.79" y="402.22" width="0.53" height="252.38" fill="#e6f2f1"/><rect x="1054.32" y="402.12" width="1.22" height="252.48" fill="#006b66"/><rect x="1055.54" y="402.72" width="1.09" height="251.88" fill="#60a19d"/><rect x="1056.63" y="402.72" width="0.40" height="251.88" fill="#e6f2f1"/><rect x="1057.03" y="402.27" width="1.15" height="252.33" fill="#006b66"/><rect x="1058.18" y="402.87" width="1.19" height="251.73" fill="#81b6b3"/><rect x="1059.37" y="402.87" width="0.38" height="251.73" fill="#e6f2f1"/><rect x="1059.75" y="401.82" width="1.05" height="252.78" fill="#006b66"/><rect x="1060.80" y="402.42" width="1.34" height="252.18" fill="#83b8b5"/><rect x="1062.14" y="402.42" width="0.33" height="252.18" fill="#e6f2f1"/><rect x="1062.47" y="402.24" width="1.15" height="252.36" fill="#006b66"/><rect x="1063.62" y="402.84" width="1.04" height="251.76" fill="#4d9591"/><rect x="1064.65" y="402.84" width="0.53" height="251.76" fill="#e6f2f1"/><rect x="1065.18" y="401.76" width="1.11" height="252.84" fill="#006b66"/><rect x="1066.29" y="402.36" width="1.08" height="252.24" fill="#92c1bf"/><rect x="1067.37" y="402.36" width="0.53" height="252.24" fill="#e6f2f1"/><rect x="1067.90" y="401.87" width="1.05" height="252.73" fill="#006b66"/><rect x="1068.95" y="402.47" width="1.25" height="252.13" fill="#70aba8"/><rect x="1070.20" y="402.47" width="0.42" height="252.13" fill="#e6f2f1"/><rect x="1070.62" y="402.25" width="1.03" height="252.35" fill="#006b66"/><rect x="1071.64" y="402.85" width="1.19" height="251.75" fill="#82b7b4"/><rect x="1072.83" y="402.85" width="0.50" height="251.75" fill="#e6f2f1"/><rect x="1073.33" y="402.18" width="1.19" height="252.42" fill="#006b66"/><rect x="1074.52" y="402.78" width="1.07" height="251.82" fill="#64a3a0"/><rect x="1075.59" y="402.78" width="0.46" height="251.82" fill="#e6f2f1"/><rect x="1076.05" y="401.82" width="1.08" height="252.78" fill="#006b66"/><rect x="1077.13" y="402.42" width="1.14" height="252.18" fill="#519793"/><rect x="1078.27" y="402.42" width="0.50" height="252.18" fill="#e6f2f1"/><rect x="1078.77" y="401.74" width="1.18" height="252.86" fill="#006b66"/><rect x="1079.95" y="402.34" width="1.15" height="252.26" fill="#509793"/><rect x="1081.10" y="402.34" width="0.38" height="252.26" fill="#e6f2f1"/><rect x="1081.48" y="401.62" width="1.13" height="252.98" fill="#006b66"/><rect x="1082.61" y="402.22" width="1.19" height="252.38" fill="#94c3c1"/><rect x="1083.80" y="402.22" width="0.40" height="252.38" fill="#e6f2f1"/><rect x="1084.20" y="402.22" width="1.25" height="252.38" fill="#006b66"/><rect x="1085.45" y="402.82" width="1.09" height="251.78" fill="#529894"/><rect x="1086.53" y="402.82" width="0.38" height="251.78" fill="#e6f2f1"/><rect x="1086.92" y="401.67" width="1.11" height="252.93" fill="#006b66"/><rect x="1088.03" y="402.27" width="1.12" height="252.33" fill="#6da9a6"/><rect x="1089.15" y="402.27" width="0.48" height="252.33" fill="#e6f2f1"/><rect x="1089.63" y="401.76" width="1.09" height="252.84" fill="#006b66"/><rect x="1090.72" y="402.36" width="1.16" height="252.24" fill="#7db4b1"/><rect x="1091.89" y="402.36" width="0.46" height="252.24" fill="#e6f2f1"/><rect x="1092.35" y="402.12" width="1.21" height="252.48" fill="#006b66"/><rect x="1093.56" y="402.72" width="1.04" height="251.88" fill="#549996"/><rect x="1094.60" y="402.72" width="0.47" height="251.88" fill="#e6f2f1"/><rect x="1095.07" y="402.19" width="1.06" height="252.41" fill="#006b66"/><rect x="1096.12" y="402.79" width="1.21" height="251.81" fill="#67a5a2"/><rect x="1097.33" y="402.79" width="0.45" height="251.81" fill="#e6f2f1"/><rect x="1097.78" y="402.12" width="1.03" height="252.48" fill="#006b66"/><rect x="1098.82" y="402.72" width="1.30" height="251.88" fill="#5e9f9c"/><rect x="1100.12" y="402.72" width="0.38" height="251.88" fill="#e6f2f1"/><rect x="1100.50" y="401.71" width="1.22" height="252.89" fill="#006b66"/><rect x="1101.72" y="402.31" width="1.05" height="252.29" fill="#64a3a0"/><rect x="1102.76" y="402.31" width="0.45" height="252.29" fill="#e6f2f1"/><rect x="1103.22" y="401.88" width="1.25" height="252.72" fill="#006b66"/><rect x="1104.46" y="402.48" width="1.03" height="252.12" fill="#5d9f9b"/><rect x="1105.50" y="402.48" width="0.44" height="252.12" fill="#e6f2f1"/><rect x="1105.93" y="402.17" width="1.16" height="252.43" fill="#006b66"/><rect x="1107.09" y="402.77" width="1.02" height="251.83" fill="#539895"/><rect x="1108.11" y="402.77" width="0.54" height="251.83" fill="#e6f2f1"/><rect x="1108.65" y="401.93" width="1.20" height="252.67" fill="#006b66"/><rect x="1109.85" y="402.53" width="1.01" height="252.07" fill="#8fbfbd"/><rect x="1110.86" y="402.53" width="0.51" height="252.07" fill="#e6f2f1"/><rect x="1111.37" y="401.63" width="1.06" height="252.97" fill="#006b66"/><rect x="1112.42" y="402.23" width="1.31" height="252.37" fill="#5a9d99"/><rect x="1113.73" y="402.23" width="0.35" height="252.37" fill="#e6f2f1"/><rect x="1114.08" y="402.28" width="1.14" height="252.32" fill="#006b66"/><rect x="1115.22" y="402.88" width="1.05" height="251.72" fill="#67a5a2"/><rect x="1116.27" y="402.88" width="0.53" height="251.72" fill="#e6f2f1"/><rect x="1116.80" y="402.21" width="1.10" height="252.39" fill="#006b66"/><rect x="1117.90" y="402.81" width="1.23" height="251.79" fill="#85b9b6"/><rect x="1119.13" y="402.81" width="0.38" height="251.79" fill="#e6f2f1"/><rect x="1119.52" y="402.26" width="1.01" height="252.34" fill="#006b66"/><rect x="1120.52" y="402.86" width="1.25" height="251.74" fill="#79b1ae"/><rect x="1121.78" y="402.86" width="0.46" height="251.74" fill="#e6f2f1"/><rect x="1122.23" y="401.75" width="1.08" height="252.85" fill="#006b66"/><rect x="1123.31" y="402.35" width="1.28" height="252.25" fill="#5b9d9a"/><rect x="1124.59" y="402.35" width="0.36" height="252.25" fill="#e6f2f1"/><rect x="1124.95" y="401.78" width="1.14" height="252.82" fill="#006b66"/><rect x="1126.09" y="402.38" width="1.11" height="252.22" fill="#5b9d9a"/><rect x="1127.20" y="402.38" width="0.47" height="252.22" fill="#e6f2f1"/><rect x="1127.67" y="401.61" width="1.07" height="252.99" fill="#006b66"/><rect x="1128.73" y="402.21" width="1.18" height="252.39" fill="#599c99"/><rect x="1129.91" y="402.21" width="0.47" height="252.39" fill="#e6f2f1"/><rect x="1130.38" y="401.82" width="1.03" height="252.78" fill="#006b66"/><rect x="1131.42" y="402.42" width="1.18" height="252.18" fill="#74aeab"/><rect x="1132.60" y="402.42" width="0.50" height="252.18" fill="#e6f2f1"/><rect x="1133.10" y="401.64" width="1.01" height="252.96" fill="#006b66"/><rect x="1134.11" y="402.24" width="1.30" height="252.36" fill="#74aeab"/><rect x="1135.40" y="402.24" width="0.41" height="252.36" fill="#e6f2f1"/><rect x="1135.82" y="402.05" width="1.00" height="252.55" fill="#006b66"/><rect x="1136.82" y="402.65" width="1.35" height="251.95" fill="#7fb5b2"/><rect x="1138.17" y="402.65" width="0.36" height="251.95" fill="#e6f2f1"/><rect x="1138.53" y="401.89" width="1.05" height="252.71" fill="#006b66"/><rect x="1139.59" y="402.49" width="1.27" height="252.11" fill="#92c1bf"/><rect x="1140.86" y="402.49" width="0.39" height="252.11" fill="#e6f2f1"/><rect x="1141.25" y="401.82" width="1.13" height="252.78" fill="#006b66"/><rect x="1142.38" y="402.42" width="1.18" height="252.18" fill="#6aa7a4"/><rect x="1143.56" y="402.42" width="0.40" height="252.18" fill="#e6f2f1"/><rect x="1143.97" y="402.20" width="1.25" height="252.40" fill="#006b66"/><rect x="1145.22" y="402.80" width="1.06" height="251.80" fill="#5a9d99"/><rect x="1146.28" y="402.80" width="0.41" height="251.80" fill="#e6f2f1"/><rect x="1146.68" y="402.11" width="1.03" height="252.49" fill="#006b66"/><rect x="1147.72" y="402.71" width="1.36" height="251.89" fill="#8ebfbd"/><rect x="1149.07" y="402.71" width="0.33" height="251.89" fill="#e6f2f1"/><rect x="1149.40" y="401.90" width="1.20" height="252.70" fill="#006b66"/><rect x="1150.60" y="402.50" width="1.10" height="252.10" fill="#8dbebc"/><rect x="1151.70" y="402.50" width="0.41" height="252.10" fill="#e6f2f1"/><rect x="1152.12" y="401.92" width="1.02" height="252.68" fill="#006b66"/><rect x="1153.14" y="402.52" width="1.37" height="252.08" fill="#74aeab"/><rect x="1154.50" y="402.52" width="0.33" height="252.08" fill="#e6f2f1"/><rect x="1154.83" y="402.05" width="1.23" height="252.55" fill="#006b66"/><rect x="1156.06" y="402.65" width="1.15" height="251.95" fill="#7ab1af"/><rect x="1157.20" y="402.65" width="0.35" height="251.95" fill="#e6f2f1"/><rect x="1157.55" y="401.86" width="1.12" height="252.74" fill="#006b66"/><rect x="1158.67" y="402.46" width="1.24" height="252.14" fill="#60a19e"/><rect x="1159.91" y="402.46" width="0.36" height="252.14" fill="#e6f2f1"/><rect x="1160.27" y="401.96" width="1.23" height="252.64" fill="#006b66"/><rect x="1161.50" y="402.56" width="1.14" height="252.04" fill="#70aba8"/><rect x="1162.63" y="402.56" width="0.35" height="252.04" fill="#e6f2f1"/><rect x="1162.98" y="402.16" width="1.24" height="252.44" fill="#006b66"/><rect x="1164.22" y="402.76" width="1.11" height="251.84" fill="#559a96"/><rect x="1165.33" y="402.76" width="0.37" height="251.84" fill="#e6f2f1"/><rect x="1165.70" y="402.26" width="1.24" height="252.34" fill="#006b66"/><rect x="1166.94" y="402.86" width="1.04" height="251.74" fill="#4f9692"/><rect x="1167.99" y="402.86" width="0.43" height="251.74" fill="#e6f2f1"/><rect x="1168.42" y="402.25" width="1.08" height="252.35" fill="#006b66"/><rect x="1169.50" y="402.85" width="1.11" height="251.75" fill="#79b1af"/><rect x="1170.61" y="402.85" width="0.52" height="251.75" fill="#e6f2f1"/><rect x="1171.13" y="402.18" width="1.02" height="252.42" fill="#006b66"/><rect x="1172.15" y="402.78" width="1.20" height="251.82" fill="#5c9e9b"/><rect x="1173.35" y="402.78" width="0.50" height="251.82" fill="#e6f2f1"/><rect x="1173.85" y="401.88" width="1.21" height="252.72" fill="#006b66"/><rect x="1175.06" y="402.48" width="1.00" height="252.12" fill="#599c99"/><rect x="1176.06" y="402.48" width="0.51" height="252.12" fill="#e6f2f1"/><rect x="1176.57" y="401.75" width="1.09" height="252.85" fill="#006b66"/><rect x="1177.65" y="402.35" width="1.19" height="252.25" fill="#68a6a3"/><rect x="1178.84" y="402.35" width="0.44" height="252.25" fill="#e6f2f1"/><rect x="1179.28" y="401.69" width="1.05" height="252.91" fill="#006b66"/><rect x="1180.33" y="402.29" width="1.19" height="252.31" fill="#8ebfbc"/><rect x="1181.52" y="402.29" width="0.48" height="252.31" fill="#e6f2f1"/><defs><linearGradient id="bg783" x1="0" y1="0" x2="0" y2="1"><stop offset="0" stop-color="#006b66" stop-opacity="0"/><stop offset="0.2" stop-color="#006b66" stop-opacity="0.25"/><stop offset="0.45" stop-color="#006b66" stop-opacity="1"/><stop offset="0.65" stop-color="#006b66" stop-opacity="1"/><stop offset="1" stop-color="#006b66" stop-opacity="0.3"/></linearGradient></defs><rect x="856" y="596" width="326" height="58" fill="url(#bg783)"/><rect x="856" y="655" width="326" height="1" fill="#8c8c8c"/><rect x="873.1" y="654.6" width="1" height="4" fill="#6e7079"/><rect x="900.0" y="654.6" width="1" height="4" fill="#6e7079"/><rect x="926.9" y="654.6" width="1" height="4" fill="#6e7079"/><rect x="953.8" y="654.6" width="1" height="4" fill="#6e7079"/><rect x="980.7" y="654.6" width="1" height="4" fill="#6e7079"/><rect x="1007.6" y="654.6" width="1" height="4" fill="#6e7079"/><rect x="1034.5" y="654.6" width="1" height="4" fill="#6e7079"/><rect x="1061.4" y="654.6" width="1" height="4" fill="#6e7079"/><rect x="1088.3" y="654.6" width="1" height="4" fill="#6e7079"/><rect x="1115.2" y="654.6" width="1" height="4" fill="#6e7079"/><rect x="1142.1" y="654.6" width="1" height="4" fill="#6e7079"/><rect x="1169.0" y="654.6" width="1" height="4" fill="#6e7079"/></svg></div>
<div class="t" style="left:770.6px;width:80px;text-align:right;top:395.64px;font-size:10px;color:#6e7079">2897.28</div>
<div class="t" style="left:770.6px;width:80px;text-align:right;top:431.34px;font-size:10px;color:#6e7079">2500.00</div>
<div class="t" style="left:770.6px;width:80px;text-align:right;top:475.04px;font-size:10px;color:#6e7079">2000.00</div>
<div class="t" style="left:770.6px;width:80px;text-align:right;top:518.93px;font-size:10px;color:#6e7079">1500.00</div>
<div class="t" style="left:770.6px;width:80px;text-align:right;top:562.83px;font-size:10px;color:#6e7079">1000.00</div>
<div class="t" style="left:770.6px;width:80px;text-align:right;top:605.43px;font-size:10px;color:#6e7079">500.00</div>
<div class="t" style="left:770.6px;width:80px;text-align:right;top:647.73px;font-size:10px;color:#6e7079">9.67</div>
<div class="t" style="left:843.60px;width:60px;text-align:center;top:660.13px;font-size:10px;color:#6e7079">14:50</div>
<div class="t" style="left:870.50px;width:60px;text-align:center;top:660.13px;font-size:10px;color:#6e7079">14:55</div>
<div class="t" style="left:897.40px;width:60px;text-align:center;top:660.13px;font-size:10px;color:#6e7079">15:00</div>
<div class="t" style="left:924.30px;width:60px;text-align:center;top:660.13px;font-size:10px;color:#6e7079">15:05</div>
<div class="t" style="left:951.20px;width:60px;text-align:center;top:660.13px;font-size:10px;color:#6e7079">15:10</div>
<div class="t" style="left:978.10px;width:60px;text-align:center;top:660.13px;font-size:10px;color:#6e7079">15:15</div>
<div class="t" style="left:1005.00px;width:60px;text-align:center;top:660.13px;font-size:10px;color:#6e7079">15:20</div>
<div class="t" style="left:1031.90px;width:60px;text-align:center;top:660.13px;font-size:10px;color:#6e7079">15:25</div>
<div class="t" style="left:1058.80px;width:60px;text-align:center;top:660.13px;font-size:10px;color:#6e7079">15:30</div>
<div class="t" style="left:1085.70px;width:60px;text-align:center;top:660.13px;font-size:10px;color:#6e7079">15:35</div>
<div class="t" style="left:1112.60px;width:60px;text-align:center;top:660.13px;font-size:10px;color:#6e7079">15:40</div>
<div class="t" style="left:1139.50px;width:60px;text-align:center;top:660.13px;font-size:10px;color:#6e7079">15:45</div>
<div class="t" style="left:818.50px;top:661.09px;font-size:10.6px;font-weight:400;color:#2d5fd8;font-style:italic;">Hour</div>
<div class="r" style="left:341px;top:730px;width:276px;height:60px;background:#fff;border-radius:6px;box-shadow:0 1px 4px rgba(30,40,90,0.10)"></div>
<div class="t" style="left:360.40px;top:752.37px;font-size:13.8px;font-weight:400;color:#12163a;-webkit-text-stroke:0.25px #12163a;">Service Error rates</div>
<svg style="left:582px;top:750px" width="16" height="16" viewBox="0 0 16 16"><circle cx="8" cy="8" r="6.8" fill="none" stroke="#bcc7ec" stroke-width="1"/><ellipse cx="8.7" cy="5.4" rx="1.25" ry="0.85" fill="#a5b3df"/><path d="M7.5 7.2 L9.5 7.2 L8.5 11.6 L6.5 11.6 Z" fill="#a5b3df"/></svg>
<svg style="left:1270px;top:707px" width="53" height="53" viewBox="0 0 53 53"><circle cx="26.5" cy="26.5" r="24" fill="#fff" stroke="#a9a9aa" stroke-width="3.6"/>
<circle cx="26.3" cy="26.2" r="11" fill="#3fcfc7"/><path d="M17.5 30 L16.1 38.7 L24.5 36.5Z" fill="#3fcfc7"/>
<rect x="25.1" y="16.3" width="1.5" height="1.5" fill="#fff"/>
<rect x="18.2" y="19.8" width="15.6" height="10.7" rx="5" fill="#fff"/>
<rect x="19.6" y="23.1" width="12.7" height="3.9" rx="1.9" fill="#111"/>
<rect x="21.3" y="24" width="3.6" height="2.3" fill="#2bbcc0"/><rect x="26.9" y="24" width="3.6" height="2.3" fill="#2bbcc0"/>
<circle cx="24.6" cy="29.2" r="0.6" fill="#333"/><circle cx="27.7" cy="29.2" r="0.6" fill="#333"/>
<ellipse cx="26.2" cy="34.3" rx="4" ry="2.7" fill="#ececec"/>
<path d="M30.8 34 Q34.3 33 35.6 29.8" stroke="#d8f4f2" stroke-width="1.1" fill="none"/>
</svg>
</div></body></html>
